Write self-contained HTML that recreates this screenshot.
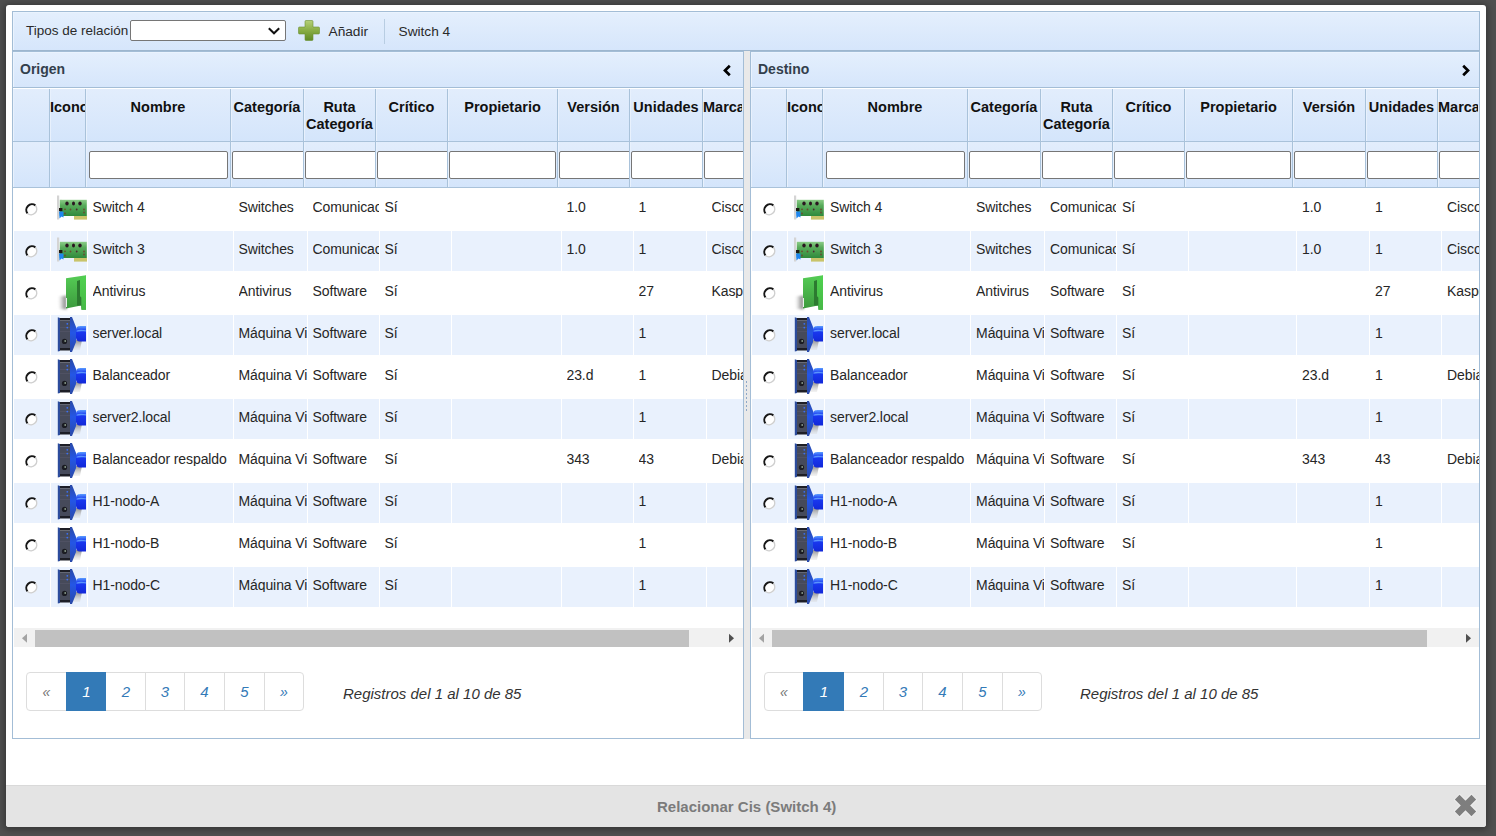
<!DOCTYPE html><html><head><meta charset="utf-8"><style>
html,body{margin:0;padding:0;}
body{width:1496px;height:836px;overflow:hidden;background:#4f4f4f;position:relative;font-family:"Liberation Sans", sans-serif;color:#222;}
.t{position:absolute;white-space:nowrap;}
.r{position:absolute;box-sizing:border-box;}
.s{position:absolute;}

.hd{font-weight:bold;font-size:14.5px;line-height:17px;text-align:center;color:#111;overflow:hidden;}
.pg{font-style:italic;font-size:15px;line-height:15px;text-align:center;}
</style></head><body>
<div class="r" style="left:6px;top:5px;width:1480px;height:822px;background:#fff;border-radius:3px;box-shadow:0 1px 6px 2px rgba(0,0,0,0.3);"></div>
<div class="r" style="left:12px;top:11px;width:1468px;height:40px;border:1px solid #a3bdd6;border-bottom-color:#9db6ce;background:linear-gradient(#e4effd,#d6e6fb);box-shadow:inset 1px 1px 0 #eaf3fe;"></div>
<div class="t" style="left:26px;top:24.369999999999997px;font-size:13.5px;line-height:13.5px;color:#2a2a2a;">Tipos de relación</div>
<div class="r" style="left:130px;top:20px;width:156px;height:21px;background:#fff;border:1px solid #767676;border-radius:2px;"></div>
<svg class="s" style="left:266px;top:26px" width="16" height="10" viewBox="0 0 16 10"><polyline points="2.8,2.3 8,7.3 13.2,2.3" fill="none" stroke="#111" stroke-width="2"/></svg>
<svg class="s" style="left:298px;top:19px" width="22" height="22" viewBox="0 0 22 22">
<defs><linearGradient id="pg" x1="0" y1="0" x2="0" y2="1"><stop offset="0" stop-color="#b5d07a"/><stop offset="0.5" stop-color="#88ad45"/><stop offset="1" stop-color="#5f8a25"/></linearGradient></defs>
<path d="M8,1.5 h6 a1,1 0 0 1 1,1 v5.5 h5.5 a1,1 0 0 1 1,1 v5 a1,1 0 0 1 -1,1 h-5.5 v5.5 a1,1 0 0 1 -1,1 h-6 a1,1 0 0 1 -1,-1 v-5.5 h-5.5 a1,1 0 0 1 -1,-1 v-5 a1,1 0 0 1 1,-1 h5.5 v-5.5 a1,1 0 0 1 1,-1 z" fill="url(#pg)" stroke="#6b9030" stroke-width="0.6"/>
</svg>
<div class="t" style="left:328.5px;top:24.6px;font-size:13.7px;line-height:13.7px;color:#2a2a2a;">Añadir</div>
<div class="r" style="left:384px;top:19px;width:1px;height:25px;background:#b8cde2;"></div>
<div class="t" style="left:398.5px;top:24.6px;font-size:13.7px;line-height:13.7px;color:#2a2a2a;">Switch 4</div>
<div class="r" style="left:6px;top:785px;width:1480px;height:42px;background:#e4e4e4;border-top:1px solid #d9d9d9;border-radius:0 0 3px 3px;"></div>
<div class="t" style="left:657px;top:798.5px;font-size:15px;line-height:15px;font-weight:bold;color:#7b7b7b;">Relacionar Cis (Switch 4)</div>
<svg class="s" style="left:1452px;top:792px" width="27" height="27" viewBox="0 0 27 27">
<path d="M4.6,4.6 L22.4,22.4 M22.4,4.6 L4.6,22.4" stroke="#eeeeee" stroke-width="8.6" stroke-linecap="butt" stroke-linejoin="round"/>
<path d="M5.2,5.2 L21.8,21.8 M21.8,5.2 L5.2,21.8" stroke="#7e7e7e" stroke-width="6.6" stroke-linecap="butt"/>
</svg>
<div class="r" style="left:744px;top:51px;width:6px;height:688px;background:#e9e9e9;"></div>
<div class="r" style="left:746px;top:381px;width:1px;height:30px;background:repeating-linear-gradient(#8fa8c8 0 2px, transparent 2px 4px);"></div>
<div class="r" style="left:12px;top:51px;width:732px;height:688px;border:1px solid #a3bdd6;background:#fff;"></div>
<div class="r" style="left:12px;top:51px;width:732px;height:37px;border:1px solid #a3bdd6;background:linear-gradient(#e4effd,#d6e6fb);box-shadow:inset 1px 1px 0 #eaf3fe;"></div>
<div class="t" style="left:20px;top:62.15px;font-size:14px;line-height:14px;font-weight:bold;color:#333f4c;">Origen</div>
<svg class="s" style="left:722px;top:63px" width="12" height="15" viewBox="0 0 12 15"><polyline points="7.8,2.8 3,7.5 7.8,12.2" fill="none" stroke="#000" stroke-width="2.7"/></svg>
<div class="r" style="left:13px;top:89px;width:730px;height:99px;overflow:hidden;">
<div class="r" style="left:0px;top:0;width:37px;height:53px;border-right:1px solid #a9c2da;border-bottom:1px solid #a9c2da;background:linear-gradient(#e2edfc,#d4e5fb);box-shadow:inset 1px 0 0 #e8f1fd;"></div>
<div class="r" style="left:0px;top:53px;width:37px;height:46px;border-right:1px solid #a9c2da;border-bottom:1px solid #a9c2da;background:linear-gradient(#e2edfc,#d4e5fb);box-shadow:inset 1px 0 0 #e8f1fd;overflow:hidden;">
</div>
<div class="r" style="left:37px;top:0;width:36px;height:53px;border-right:1px solid #a9c2da;border-bottom:1px solid #a9c2da;background:linear-gradient(#e2edfc,#d4e5fb);box-shadow:inset 1px 0 0 #e8f1fd;"></div>
<div class="r" style="left:37px;top:53px;width:36px;height:46px;border-right:1px solid #a9c2da;border-bottom:1px solid #a9c2da;background:linear-gradient(#e2edfc,#d4e5fb);box-shadow:inset 1px 0 0 #e8f1fd;overflow:hidden;">
</div>
<div class="t hd" style="left:37px;top:10px;width:35px;">Icono</div>
<div class="r" style="left:73px;top:0;width:145px;height:53px;border-right:1px solid #a9c2da;border-bottom:1px solid #a9c2da;background:linear-gradient(#e2edfc,#d4e5fb);box-shadow:inset 1px 0 0 #e8f1fd;"></div>
<div class="r" style="left:73px;top:53px;width:145px;height:46px;border-right:1px solid #a9c2da;border-bottom:1px solid #a9c2da;background:linear-gradient(#e2edfc,#d4e5fb);box-shadow:inset 1px 0 0 #e8f1fd;overflow:hidden;">
<div class="r" style="left:3px;top:9px;width:139px;height:28px;background:#fff;border:1px solid #767676;border-radius:2px;"></div>
</div>
<div class="t hd" style="left:73px;top:10px;width:144px;">Nombre</div>
<div class="r" style="left:218px;top:0;width:73px;height:53px;border-right:1px solid #a9c2da;border-bottom:1px solid #a9c2da;background:linear-gradient(#e2edfc,#d4e5fb);box-shadow:inset 1px 0 0 #e8f1fd;"></div>
<div class="r" style="left:218px;top:53px;width:73px;height:46px;border-right:1px solid #a9c2da;border-bottom:1px solid #a9c2da;background:linear-gradient(#e2edfc,#d4e5fb);box-shadow:inset 1px 0 0 #e8f1fd;overflow:hidden;">
<div class="r" style="left:1px;top:9px;width:76px;height:28px;background:#fff;border:1px solid #767676;border-radius:2px;"></div>
</div>
<div class="t hd" style="left:218px;top:10px;width:72px;">Categoría</div>
<div class="r" style="left:291px;top:0;width:72px;height:53px;border-right:1px solid #a9c2da;border-bottom:1px solid #a9c2da;background:linear-gradient(#e2edfc,#d4e5fb);box-shadow:inset 1px 0 0 #e8f1fd;"></div>
<div class="r" style="left:291px;top:53px;width:72px;height:46px;border-right:1px solid #a9c2da;border-bottom:1px solid #a9c2da;background:linear-gradient(#e2edfc,#d4e5fb);box-shadow:inset 1px 0 0 #e8f1fd;overflow:hidden;">
<div class="r" style="left:1px;top:9px;width:76px;height:28px;background:#fff;border:1px solid #767676;border-radius:2px;"></div>
</div>
<div class="t hd" style="left:291px;top:10px;width:71px;">Ruta<br>Categoría</div>
<div class="r" style="left:363px;top:0;width:72px;height:53px;border-right:1px solid #a9c2da;border-bottom:1px solid #a9c2da;background:linear-gradient(#e2edfc,#d4e5fb);box-shadow:inset 1px 0 0 #e8f1fd;"></div>
<div class="r" style="left:363px;top:53px;width:72px;height:46px;border-right:1px solid #a9c2da;border-bottom:1px solid #a9c2da;background:linear-gradient(#e2edfc,#d4e5fb);box-shadow:inset 1px 0 0 #e8f1fd;overflow:hidden;">
<div class="r" style="left:1px;top:9px;width:76px;height:28px;background:#fff;border:1px solid #767676;border-radius:2px;"></div>
</div>
<div class="t hd" style="left:363px;top:10px;width:71px;">Crítico</div>
<div class="r" style="left:435px;top:0;width:110px;height:53px;border-right:1px solid #a9c2da;border-bottom:1px solid #a9c2da;background:linear-gradient(#e2edfc,#d4e5fb);box-shadow:inset 1px 0 0 #e8f1fd;"></div>
<div class="r" style="left:435px;top:53px;width:110px;height:46px;border-right:1px solid #a9c2da;border-bottom:1px solid #a9c2da;background:linear-gradient(#e2edfc,#d4e5fb);box-shadow:inset 1px 0 0 #e8f1fd;overflow:hidden;">
<div class="r" style="left:1px;top:9px;width:107px;height:28px;background:#fff;border:1px solid #767676;border-radius:2px;"></div>
</div>
<div class="t hd" style="left:435px;top:10px;width:109px;">Propietario</div>
<div class="r" style="left:545px;top:0;width:72px;height:53px;border-right:1px solid #a9c2da;border-bottom:1px solid #a9c2da;background:linear-gradient(#e2edfc,#d4e5fb);box-shadow:inset 1px 0 0 #e8f1fd;"></div>
<div class="r" style="left:545px;top:53px;width:72px;height:46px;border-right:1px solid #a9c2da;border-bottom:1px solid #a9c2da;background:linear-gradient(#e2edfc,#d4e5fb);box-shadow:inset 1px 0 0 #e8f1fd;overflow:hidden;">
<div class="r" style="left:1px;top:9px;width:76px;height:28px;background:#fff;border:1px solid #767676;border-radius:2px;"></div>
</div>
<div class="t hd" style="left:545px;top:10px;width:71px;">Versión</div>
<div class="r" style="left:617px;top:0;width:73px;height:53px;border-right:1px solid #a9c2da;border-bottom:1px solid #a9c2da;background:linear-gradient(#e2edfc,#d4e5fb);box-shadow:inset 1px 0 0 #e8f1fd;"></div>
<div class="r" style="left:617px;top:53px;width:73px;height:46px;border-right:1px solid #a9c2da;border-bottom:1px solid #a9c2da;background:linear-gradient(#e2edfc,#d4e5fb);box-shadow:inset 1px 0 0 #e8f1fd;overflow:hidden;">
<div class="r" style="left:1px;top:9px;width:76px;height:28px;background:#fff;border:1px solid #767676;border-radius:2px;"></div>
</div>
<div class="t hd" style="left:617px;top:10px;width:72px;">Unidades</div>
<div class="r" style="left:690px;top:0;width:40px;height:53px;border-bottom:1px solid #a9c2da;background:linear-gradient(#e2edfc,#d4e5fb);box-shadow:inset 1px 0 0 #e8f1fd;"></div>
<div class="r" style="left:690px;top:53px;width:40px;height:46px;border-bottom:1px solid #a9c2da;background:linear-gradient(#e2edfc,#d4e5fb);box-shadow:inset 1px 0 0 #e8f1fd;overflow:hidden;">
<div class="r" style="left:1px;top:9px;width:76px;height:28px;background:#fff;border:1px solid #767676;border-radius:2px;"></div>
</div>
<div class="t hd" style="left:690px;top:10px;width:39px;">Marca</div>
</div>
<svg class="s" style="left:24.2px;top:201.5px" width="15" height="15" viewBox="0 0 15 15">
<circle cx="7.5" cy="7.5" r="5.7" fill="#fff"/>
<path d="M3.5,11.5 A5.7,5.7 0 0 1 11.5,3.5" fill="none" stroke="#161616" stroke-width="2"/>
<path d="M11.5,3.5 A5.7,5.7 0 0 1 3.5,11.5" fill="none" stroke="#cfcfcf" stroke-width="1.5"/>
</svg>
<svg class="s" style="left:54px;top:192px" width="33" height="30" viewBox="0 0 33 30">
<defs><linearGradient id="swg" x1="0" y1="0" x2="0" y2="1"><stop offset="0" stop-color="#8ccc88"/><stop offset="0.35" stop-color="#58ab5a"/><stop offset="1" stop-color="#2f8a3c"/></linearGradient></defs>
<rect x="3" y="3.5" width="2.2" height="24" fill="#d4d4d4"/>
<rect x="5" y="7.5" width="3" height="6.5" fill="#f4f4f4"/>
<rect x="5.8" y="7.8" width="27" height="16.2" fill="url(#swg)"/>
<rect x="20" y="24" width="13" height="3.6" fill="#c9c46a"/>
<ellipse cx="13" cy="11.5" rx="1.7" ry="2" fill="#2a1620"/><ellipse cx="19.5" cy="11.5" rx="1.5" ry="2" fill="#2a1620"/><ellipse cx="26" cy="11.5" rx="1.7" ry="2" fill="#2a1620"/>
<circle cx="11" cy="17.3" r="0.9" fill="#6a4a30"/><circle cx="16.5" cy="17.5" r="0.9" fill="#6a4a30"/><circle cx="22.7" cy="17.5" r="0.9" fill="#4a2a30"/><circle cx="30" cy="17.5" r="0.9" fill="#6a4a30"/><circle cx="11" cy="21.5" r="0.9" fill="#6a4a30"/><circle cx="30" cy="20.5" r="0.9" fill="#6a4a30"/>
<rect x="5" y="16" width="3.4" height="3.2" fill="#1e1a14"/>
<path d="M5,19.5 L9.5,19.5 L9.5,25.5 L7.5,24.5 L5.5,26.5 Z" fill="#1f86ee"/>
</svg>
<div class="t" style="left:92.5px;top:200.15px;font-size:14px;line-height:14px;color:#262626;width:140.5px;overflow:hidden;letter-spacing:-0.1px;">Switch 4</div>
<div class="t" style="left:238.5px;top:200.15px;font-size:14px;line-height:14px;color:#262626;width:68.5px;overflow:hidden;letter-spacing:-0.1px;">Switches</div>
<div class="t" style="left:312.5px;top:200.15px;font-size:14px;line-height:14px;color:#262626;width:66.5px;overflow:hidden;letter-spacing:-0.1px;">Comunicaciones</div>
<div class="t" style="left:384.5px;top:200.15px;font-size:14px;line-height:14px;color:#262626;width:66.5px;overflow:hidden;letter-spacing:-0.1px;">Sí</div>
<div class="t" style="left:566.5px;top:200.15px;font-size:14px;line-height:14px;color:#262626;width:66.5px;overflow:hidden;letter-spacing:-0.1px;">1.0</div>
<div class="t" style="left:638.5px;top:200.15px;font-size:14px;line-height:14px;color:#262626;width:67.5px;overflow:hidden;letter-spacing:-0.1px;">1</div>
<div class="t" style="left:711.5px;top:200.15px;font-size:14px;line-height:14px;color:#262626;width:31.5px;overflow:hidden;letter-spacing:-0.1px;">Cisco</div>
<div class="r" style="left:14px;top:231px;width:36px;height:40px;background:#e9f1fd;"></div>
<div class="r" style="left:51px;top:231px;width:36px;height:40px;background:#e9f1fd;"></div>
<div class="r" style="left:88px;top:231px;width:145px;height:40px;background:#e9f1fd;"></div>
<div class="r" style="left:234px;top:231px;width:73px;height:40px;background:#e9f1fd;"></div>
<div class="r" style="left:308px;top:231px;width:71px;height:40px;background:#e9f1fd;"></div>
<div class="r" style="left:380px;top:231px;width:71px;height:40px;background:#e9f1fd;"></div>
<div class="r" style="left:452px;top:231px;width:109px;height:40px;background:#e9f1fd;"></div>
<div class="r" style="left:562px;top:231px;width:71px;height:40px;background:#e9f1fd;"></div>
<div class="r" style="left:634px;top:231px;width:72px;height:40px;background:#e9f1fd;"></div>
<div class="r" style="left:707px;top:231px;width:36px;height:40px;background:#e9f1fd;"></div>
<svg class="s" style="left:24.2px;top:243.5px" width="15" height="15" viewBox="0 0 15 15">
<circle cx="7.5" cy="7.5" r="5.7" fill="#fff"/>
<path d="M3.5,11.5 A5.7,5.7 0 0 1 11.5,3.5" fill="none" stroke="#161616" stroke-width="2"/>
<path d="M11.5,3.5 A5.7,5.7 0 0 1 3.5,11.5" fill="none" stroke="#cfcfcf" stroke-width="1.5"/>
</svg>
<svg class="s" style="left:54px;top:234px" width="33" height="30" viewBox="0 0 33 30">
<defs><linearGradient id="swg" x1="0" y1="0" x2="0" y2="1"><stop offset="0" stop-color="#8ccc88"/><stop offset="0.35" stop-color="#58ab5a"/><stop offset="1" stop-color="#2f8a3c"/></linearGradient></defs>
<rect x="3" y="3.5" width="2.2" height="24" fill="#d4d4d4"/>
<rect x="5" y="7.5" width="3" height="6.5" fill="#f4f4f4"/>
<rect x="5.8" y="7.8" width="27" height="16.2" fill="url(#swg)"/>
<rect x="20" y="24" width="13" height="3.6" fill="#c9c46a"/>
<ellipse cx="13" cy="11.5" rx="1.7" ry="2" fill="#2a1620"/><ellipse cx="19.5" cy="11.5" rx="1.5" ry="2" fill="#2a1620"/><ellipse cx="26" cy="11.5" rx="1.7" ry="2" fill="#2a1620"/>
<circle cx="11" cy="17.3" r="0.9" fill="#6a4a30"/><circle cx="16.5" cy="17.5" r="0.9" fill="#6a4a30"/><circle cx="22.7" cy="17.5" r="0.9" fill="#4a2a30"/><circle cx="30" cy="17.5" r="0.9" fill="#6a4a30"/><circle cx="11" cy="21.5" r="0.9" fill="#6a4a30"/><circle cx="30" cy="20.5" r="0.9" fill="#6a4a30"/>
<rect x="5" y="16" width="3.4" height="3.2" fill="#1e1a14"/>
<path d="M5,19.5 L9.5,19.5 L9.5,25.5 L7.5,24.5 L5.5,26.5 Z" fill="#1f86ee"/>
</svg>
<div class="t" style="left:92.5px;top:242.15px;font-size:14px;line-height:14px;color:#262626;width:140.5px;overflow:hidden;letter-spacing:-0.1px;">Switch 3</div>
<div class="t" style="left:238.5px;top:242.15px;font-size:14px;line-height:14px;color:#262626;width:68.5px;overflow:hidden;letter-spacing:-0.1px;">Switches</div>
<div class="t" style="left:312.5px;top:242.15px;font-size:14px;line-height:14px;color:#262626;width:66.5px;overflow:hidden;letter-spacing:-0.1px;">Comunicaciones</div>
<div class="t" style="left:384.5px;top:242.15px;font-size:14px;line-height:14px;color:#262626;width:66.5px;overflow:hidden;letter-spacing:-0.1px;">Sí</div>
<div class="t" style="left:566.5px;top:242.15px;font-size:14px;line-height:14px;color:#262626;width:66.5px;overflow:hidden;letter-spacing:-0.1px;">1.0</div>
<div class="t" style="left:638.5px;top:242.15px;font-size:14px;line-height:14px;color:#262626;width:67.5px;overflow:hidden;letter-spacing:-0.1px;">1</div>
<div class="t" style="left:711.5px;top:242.15px;font-size:14px;line-height:14px;color:#262626;width:31.5px;overflow:hidden;letter-spacing:-0.1px;">Cisco</div>
<svg class="s" style="left:24.2px;top:285.5px" width="15" height="15" viewBox="0 0 15 15">
<circle cx="7.5" cy="7.5" r="5.7" fill="#fff"/>
<path d="M3.5,11.5 A5.7,5.7 0 0 1 11.5,3.5" fill="none" stroke="#161616" stroke-width="2"/>
<path d="M11.5,3.5 A5.7,5.7 0 0 1 3.5,11.5" fill="none" stroke="#cfcfcf" stroke-width="1.5"/>
</svg>
<svg class="s" style="left:54px;top:272px" width="33" height="42" viewBox="0 0 33 42">
<defs><linearGradient id="avg" x1="0" y1="0" x2="0" y2="1"><stop offset="0" stop-color="#55cc55"/><stop offset="1" stop-color="#3b983d"/></linearGradient>
<linearGradient id="avf" x1="0" y1="0" x2="0" y2="1"><stop offset="0" stop-color="#4fd24f"/><stop offset="1" stop-color="#46b846"/></linearGradient>
<linearGradient id="avs" x1="0" y1="0" x2="1" y2="0"><stop offset="0" stop-color="#ffffff" stop-opacity="0"/><stop offset="0.55" stop-color="#c4c4c4"/><stop offset="1" stop-color="#808080"/></linearGradient>
<filter id="avb" x="-50%" y="-50%" width="200%" height="200%"><feGaussianBlur stdDeviation="1.1"/></filter></defs>
<path d="M3,24.5 L12.5,23.5 L12.5,37.5 L5,37 Z" fill="url(#avs)" filter="url(#avb)"/>
<path d="M12,6.2 L32,3.2 L32,37.8 L27.5,37.8 L27,33.5 L12,36.5 Z" fill="url(#avg)"/>
<path d="M23,9 L26,8 L26,24 L27.5,25.5 L27.5,33.5 L23,33.5 Z" fill="#2c7a30"/>
<path d="M26,7.5 L32,3.5 L32,37.5 L27.5,37.8 L27.5,25.5 L26,24 Z" fill="url(#avf)"/>
<rect x="12" y="26" width="1" height="9" fill="#e6f2ea"/>
</svg>
<div class="t" style="left:92.5px;top:284.15px;font-size:14px;line-height:14px;color:#262626;width:140.5px;overflow:hidden;letter-spacing:-0.1px;">Antivirus</div>
<div class="t" style="left:238.5px;top:284.15px;font-size:14px;line-height:14px;color:#262626;width:68.5px;overflow:hidden;letter-spacing:-0.1px;">Antivirus</div>
<div class="t" style="left:312.5px;top:284.15px;font-size:14px;line-height:14px;color:#262626;width:66.5px;overflow:hidden;letter-spacing:-0.1px;">Software</div>
<div class="t" style="left:384.5px;top:284.15px;font-size:14px;line-height:14px;color:#262626;width:66.5px;overflow:hidden;letter-spacing:-0.1px;">Sí</div>
<div class="t" style="left:638.5px;top:284.15px;font-size:14px;line-height:14px;color:#262626;width:67.5px;overflow:hidden;letter-spacing:-0.1px;">27</div>
<div class="t" style="left:711.5px;top:284.15px;font-size:14px;line-height:14px;color:#262626;width:31.5px;overflow:hidden;letter-spacing:-0.1px;">Kaspersky</div>
<div class="r" style="left:14px;top:315px;width:36px;height:40px;background:#e9f1fd;"></div>
<div class="r" style="left:51px;top:315px;width:36px;height:40px;background:#e9f1fd;"></div>
<div class="r" style="left:88px;top:315px;width:145px;height:40px;background:#e9f1fd;"></div>
<div class="r" style="left:234px;top:315px;width:73px;height:40px;background:#e9f1fd;"></div>
<div class="r" style="left:308px;top:315px;width:71px;height:40px;background:#e9f1fd;"></div>
<div class="r" style="left:380px;top:315px;width:71px;height:40px;background:#e9f1fd;"></div>
<div class="r" style="left:452px;top:315px;width:109px;height:40px;background:#e9f1fd;"></div>
<div class="r" style="left:562px;top:315px;width:71px;height:40px;background:#e9f1fd;"></div>
<div class="r" style="left:634px;top:315px;width:72px;height:40px;background:#e9f1fd;"></div>
<div class="r" style="left:707px;top:315px;width:36px;height:40px;background:#e9f1fd;"></div>
<svg class="s" style="left:24.2px;top:327.5px" width="15" height="15" viewBox="0 0 15 15">
<circle cx="7.5" cy="7.5" r="5.7" fill="#fff"/>
<path d="M3.5,11.5 A5.7,5.7 0 0 1 11.5,3.5" fill="none" stroke="#161616" stroke-width="2"/>
<path d="M11.5,3.5 A5.7,5.7 0 0 1 3.5,11.5" fill="none" stroke="#cfcfcf" stroke-width="1.5"/>
</svg>
<svg class="s" style="left:54px;top:314px" width="33" height="42" viewBox="0 0 33 42">
<defs><linearGradient id="svg1" x1="0" y1="0" x2="0" y2="1"><stop offset="0" stop-color="#5a9cff"/><stop offset="0.3" stop-color="#1a3af2"/><stop offset="1" stop-color="#1228d8"/></linearGradient>
<linearGradient id="svside" x1="0" y1="0" x2="0" y2="1"><stop offset="0" stop-color="#2a4aa8"/><stop offset="0.45" stop-color="#2456e6"/><stop offset="1" stop-color="#2a4aa8"/></linearGradient>
<linearGradient id="svsh" x1="0" y1="0" x2="0" y2="1"><stop offset="0" stop-color="#8a8a8a"/><stop offset="1" stop-color="#d8d8d8" stop-opacity="0.3"/></linearGradient></defs>
<path d="M19,26 L28,26 L26,36 L19,36 Z" fill="url(#svsh)"/>
<path d="M3.8,3.3 L6,4 L6,37 L3.8,37.5 Z" fill="#2c4c9c"/>
<rect x="6" y="4" width="10" height="2.5" fill="#1d1e26"/>
<rect x="6" y="6.5" width="10" height="28" fill="#464a5a"/>
<rect x="6" y="34" width="10" height="2.5" fill="#1d1e26"/>
<rect x="6" y="13" width="10" height="0.6" fill="#55576a"/><rect x="6" y="17" width="10" height="0.6" fill="#55576a"/>
<circle cx="13.3" cy="9.8" r="0.9" fill="#3a70f5"/><circle cx="13.3" cy="13.6" r="0.9" fill="#3a70f5"/>
<circle cx="10.5" cy="27.4" r="2.6" fill="#1b1c22"/><circle cx="11.2" cy="27" r="0.9" fill="#8a9a8a"/>
<path d="M16,3 L18,3 L22,13 L22,28 L18,38 L16,38 Z" fill="url(#svside)"/>
<path d="M22,15.5 C22,12.5 24.5,12 27,12 L32,12 L32,27.6 L27,27.6 C24,27.6 22,26.5 22,23.5 Z" fill="url(#svg1)"/>
<path d="M22.5,16.5 C25,15.5 28,15.5 32,16.2 L32,17.5 C28,17 25,17 22.5,17.8 Z" fill="#6aaaff" opacity="0.8"/>
</svg>
<div class="t" style="left:92.5px;top:326.15px;font-size:14px;line-height:14px;color:#262626;width:140.5px;overflow:hidden;letter-spacing:-0.1px;">server.local</div>
<div class="t" style="left:238.5px;top:326.15px;font-size:14px;line-height:14px;color:#262626;width:68.5px;overflow:hidden;letter-spacing:-0.1px;">Máquina Virtual</div>
<div class="t" style="left:312.5px;top:326.15px;font-size:14px;line-height:14px;color:#262626;width:66.5px;overflow:hidden;letter-spacing:-0.1px;">Software</div>
<div class="t" style="left:384.5px;top:326.15px;font-size:14px;line-height:14px;color:#262626;width:66.5px;overflow:hidden;letter-spacing:-0.1px;">Sí</div>
<div class="t" style="left:638.5px;top:326.15px;font-size:14px;line-height:14px;color:#262626;width:67.5px;overflow:hidden;letter-spacing:-0.1px;">1</div>
<svg class="s" style="left:24.2px;top:369.5px" width="15" height="15" viewBox="0 0 15 15">
<circle cx="7.5" cy="7.5" r="5.7" fill="#fff"/>
<path d="M3.5,11.5 A5.7,5.7 0 0 1 11.5,3.5" fill="none" stroke="#161616" stroke-width="2"/>
<path d="M11.5,3.5 A5.7,5.7 0 0 1 3.5,11.5" fill="none" stroke="#cfcfcf" stroke-width="1.5"/>
</svg>
<svg class="s" style="left:54px;top:356px" width="33" height="42" viewBox="0 0 33 42">
<defs><linearGradient id="svg1" x1="0" y1="0" x2="0" y2="1"><stop offset="0" stop-color="#5a9cff"/><stop offset="0.3" stop-color="#1a3af2"/><stop offset="1" stop-color="#1228d8"/></linearGradient>
<linearGradient id="svside" x1="0" y1="0" x2="0" y2="1"><stop offset="0" stop-color="#2a4aa8"/><stop offset="0.45" stop-color="#2456e6"/><stop offset="1" stop-color="#2a4aa8"/></linearGradient>
<linearGradient id="svsh" x1="0" y1="0" x2="0" y2="1"><stop offset="0" stop-color="#8a8a8a"/><stop offset="1" stop-color="#d8d8d8" stop-opacity="0.3"/></linearGradient></defs>
<path d="M19,26 L28,26 L26,36 L19,36 Z" fill="url(#svsh)"/>
<path d="M3.8,3.3 L6,4 L6,37 L3.8,37.5 Z" fill="#2c4c9c"/>
<rect x="6" y="4" width="10" height="2.5" fill="#1d1e26"/>
<rect x="6" y="6.5" width="10" height="28" fill="#464a5a"/>
<rect x="6" y="34" width="10" height="2.5" fill="#1d1e26"/>
<rect x="6" y="13" width="10" height="0.6" fill="#55576a"/><rect x="6" y="17" width="10" height="0.6" fill="#55576a"/>
<circle cx="13.3" cy="9.8" r="0.9" fill="#3a70f5"/><circle cx="13.3" cy="13.6" r="0.9" fill="#3a70f5"/>
<circle cx="10.5" cy="27.4" r="2.6" fill="#1b1c22"/><circle cx="11.2" cy="27" r="0.9" fill="#8a9a8a"/>
<path d="M16,3 L18,3 L22,13 L22,28 L18,38 L16,38 Z" fill="url(#svside)"/>
<path d="M22,15.5 C22,12.5 24.5,12 27,12 L32,12 L32,27.6 L27,27.6 C24,27.6 22,26.5 22,23.5 Z" fill="url(#svg1)"/>
<path d="M22.5,16.5 C25,15.5 28,15.5 32,16.2 L32,17.5 C28,17 25,17 22.5,17.8 Z" fill="#6aaaff" opacity="0.8"/>
</svg>
<div class="t" style="left:92.5px;top:368.15px;font-size:14px;line-height:14px;color:#262626;width:140.5px;overflow:hidden;letter-spacing:-0.1px;">Balanceador</div>
<div class="t" style="left:238.5px;top:368.15px;font-size:14px;line-height:14px;color:#262626;width:68.5px;overflow:hidden;letter-spacing:-0.1px;">Máquina Virtual</div>
<div class="t" style="left:312.5px;top:368.15px;font-size:14px;line-height:14px;color:#262626;width:66.5px;overflow:hidden;letter-spacing:-0.1px;">Software</div>
<div class="t" style="left:384.5px;top:368.15px;font-size:14px;line-height:14px;color:#262626;width:66.5px;overflow:hidden;letter-spacing:-0.1px;">Sí</div>
<div class="t" style="left:566.5px;top:368.15px;font-size:14px;line-height:14px;color:#262626;width:66.5px;overflow:hidden;letter-spacing:-0.1px;">23.d</div>
<div class="t" style="left:638.5px;top:368.15px;font-size:14px;line-height:14px;color:#262626;width:67.5px;overflow:hidden;letter-spacing:-0.1px;">1</div>
<div class="t" style="left:711.5px;top:368.15px;font-size:14px;line-height:14px;color:#262626;width:31.5px;overflow:hidden;letter-spacing:-0.1px;">Debian</div>
<div class="r" style="left:14px;top:399px;width:36px;height:40px;background:#e9f1fd;"></div>
<div class="r" style="left:51px;top:399px;width:36px;height:40px;background:#e9f1fd;"></div>
<div class="r" style="left:88px;top:399px;width:145px;height:40px;background:#e9f1fd;"></div>
<div class="r" style="left:234px;top:399px;width:73px;height:40px;background:#e9f1fd;"></div>
<div class="r" style="left:308px;top:399px;width:71px;height:40px;background:#e9f1fd;"></div>
<div class="r" style="left:380px;top:399px;width:71px;height:40px;background:#e9f1fd;"></div>
<div class="r" style="left:452px;top:399px;width:109px;height:40px;background:#e9f1fd;"></div>
<div class="r" style="left:562px;top:399px;width:71px;height:40px;background:#e9f1fd;"></div>
<div class="r" style="left:634px;top:399px;width:72px;height:40px;background:#e9f1fd;"></div>
<div class="r" style="left:707px;top:399px;width:36px;height:40px;background:#e9f1fd;"></div>
<svg class="s" style="left:24.2px;top:411.5px" width="15" height="15" viewBox="0 0 15 15">
<circle cx="7.5" cy="7.5" r="5.7" fill="#fff"/>
<path d="M3.5,11.5 A5.7,5.7 0 0 1 11.5,3.5" fill="none" stroke="#161616" stroke-width="2"/>
<path d="M11.5,3.5 A5.7,5.7 0 0 1 3.5,11.5" fill="none" stroke="#cfcfcf" stroke-width="1.5"/>
</svg>
<svg class="s" style="left:54px;top:398px" width="33" height="42" viewBox="0 0 33 42">
<defs><linearGradient id="svg1" x1="0" y1="0" x2="0" y2="1"><stop offset="0" stop-color="#5a9cff"/><stop offset="0.3" stop-color="#1a3af2"/><stop offset="1" stop-color="#1228d8"/></linearGradient>
<linearGradient id="svside" x1="0" y1="0" x2="0" y2="1"><stop offset="0" stop-color="#2a4aa8"/><stop offset="0.45" stop-color="#2456e6"/><stop offset="1" stop-color="#2a4aa8"/></linearGradient>
<linearGradient id="svsh" x1="0" y1="0" x2="0" y2="1"><stop offset="0" stop-color="#8a8a8a"/><stop offset="1" stop-color="#d8d8d8" stop-opacity="0.3"/></linearGradient></defs>
<path d="M19,26 L28,26 L26,36 L19,36 Z" fill="url(#svsh)"/>
<path d="M3.8,3.3 L6,4 L6,37 L3.8,37.5 Z" fill="#2c4c9c"/>
<rect x="6" y="4" width="10" height="2.5" fill="#1d1e26"/>
<rect x="6" y="6.5" width="10" height="28" fill="#464a5a"/>
<rect x="6" y="34" width="10" height="2.5" fill="#1d1e26"/>
<rect x="6" y="13" width="10" height="0.6" fill="#55576a"/><rect x="6" y="17" width="10" height="0.6" fill="#55576a"/>
<circle cx="13.3" cy="9.8" r="0.9" fill="#3a70f5"/><circle cx="13.3" cy="13.6" r="0.9" fill="#3a70f5"/>
<circle cx="10.5" cy="27.4" r="2.6" fill="#1b1c22"/><circle cx="11.2" cy="27" r="0.9" fill="#8a9a8a"/>
<path d="M16,3 L18,3 L22,13 L22,28 L18,38 L16,38 Z" fill="url(#svside)"/>
<path d="M22,15.5 C22,12.5 24.5,12 27,12 L32,12 L32,27.6 L27,27.6 C24,27.6 22,26.5 22,23.5 Z" fill="url(#svg1)"/>
<path d="M22.5,16.5 C25,15.5 28,15.5 32,16.2 L32,17.5 C28,17 25,17 22.5,17.8 Z" fill="#6aaaff" opacity="0.8"/>
</svg>
<div class="t" style="left:92.5px;top:410.15px;font-size:14px;line-height:14px;color:#262626;width:140.5px;overflow:hidden;letter-spacing:-0.1px;">server2.local</div>
<div class="t" style="left:238.5px;top:410.15px;font-size:14px;line-height:14px;color:#262626;width:68.5px;overflow:hidden;letter-spacing:-0.1px;">Máquina Virtual</div>
<div class="t" style="left:312.5px;top:410.15px;font-size:14px;line-height:14px;color:#262626;width:66.5px;overflow:hidden;letter-spacing:-0.1px;">Software</div>
<div class="t" style="left:384.5px;top:410.15px;font-size:14px;line-height:14px;color:#262626;width:66.5px;overflow:hidden;letter-spacing:-0.1px;">Sí</div>
<div class="t" style="left:638.5px;top:410.15px;font-size:14px;line-height:14px;color:#262626;width:67.5px;overflow:hidden;letter-spacing:-0.1px;">1</div>
<svg class="s" style="left:24.2px;top:453.5px" width="15" height="15" viewBox="0 0 15 15">
<circle cx="7.5" cy="7.5" r="5.7" fill="#fff"/>
<path d="M3.5,11.5 A5.7,5.7 0 0 1 11.5,3.5" fill="none" stroke="#161616" stroke-width="2"/>
<path d="M11.5,3.5 A5.7,5.7 0 0 1 3.5,11.5" fill="none" stroke="#cfcfcf" stroke-width="1.5"/>
</svg>
<svg class="s" style="left:54px;top:440px" width="33" height="42" viewBox="0 0 33 42">
<defs><linearGradient id="svg1" x1="0" y1="0" x2="0" y2="1"><stop offset="0" stop-color="#5a9cff"/><stop offset="0.3" stop-color="#1a3af2"/><stop offset="1" stop-color="#1228d8"/></linearGradient>
<linearGradient id="svside" x1="0" y1="0" x2="0" y2="1"><stop offset="0" stop-color="#2a4aa8"/><stop offset="0.45" stop-color="#2456e6"/><stop offset="1" stop-color="#2a4aa8"/></linearGradient>
<linearGradient id="svsh" x1="0" y1="0" x2="0" y2="1"><stop offset="0" stop-color="#8a8a8a"/><stop offset="1" stop-color="#d8d8d8" stop-opacity="0.3"/></linearGradient></defs>
<path d="M19,26 L28,26 L26,36 L19,36 Z" fill="url(#svsh)"/>
<path d="M3.8,3.3 L6,4 L6,37 L3.8,37.5 Z" fill="#2c4c9c"/>
<rect x="6" y="4" width="10" height="2.5" fill="#1d1e26"/>
<rect x="6" y="6.5" width="10" height="28" fill="#464a5a"/>
<rect x="6" y="34" width="10" height="2.5" fill="#1d1e26"/>
<rect x="6" y="13" width="10" height="0.6" fill="#55576a"/><rect x="6" y="17" width="10" height="0.6" fill="#55576a"/>
<circle cx="13.3" cy="9.8" r="0.9" fill="#3a70f5"/><circle cx="13.3" cy="13.6" r="0.9" fill="#3a70f5"/>
<circle cx="10.5" cy="27.4" r="2.6" fill="#1b1c22"/><circle cx="11.2" cy="27" r="0.9" fill="#8a9a8a"/>
<path d="M16,3 L18,3 L22,13 L22,28 L18,38 L16,38 Z" fill="url(#svside)"/>
<path d="M22,15.5 C22,12.5 24.5,12 27,12 L32,12 L32,27.6 L27,27.6 C24,27.6 22,26.5 22,23.5 Z" fill="url(#svg1)"/>
<path d="M22.5,16.5 C25,15.5 28,15.5 32,16.2 L32,17.5 C28,17 25,17 22.5,17.8 Z" fill="#6aaaff" opacity="0.8"/>
</svg>
<div class="t" style="left:92.5px;top:452.15px;font-size:14px;line-height:14px;color:#262626;width:140.5px;overflow:hidden;letter-spacing:-0.1px;">Balanceador respaldo</div>
<div class="t" style="left:238.5px;top:452.15px;font-size:14px;line-height:14px;color:#262626;width:68.5px;overflow:hidden;letter-spacing:-0.1px;">Máquina Virtual</div>
<div class="t" style="left:312.5px;top:452.15px;font-size:14px;line-height:14px;color:#262626;width:66.5px;overflow:hidden;letter-spacing:-0.1px;">Software</div>
<div class="t" style="left:384.5px;top:452.15px;font-size:14px;line-height:14px;color:#262626;width:66.5px;overflow:hidden;letter-spacing:-0.1px;">Sí</div>
<div class="t" style="left:566.5px;top:452.15px;font-size:14px;line-height:14px;color:#262626;width:66.5px;overflow:hidden;letter-spacing:-0.1px;">343</div>
<div class="t" style="left:638.5px;top:452.15px;font-size:14px;line-height:14px;color:#262626;width:67.5px;overflow:hidden;letter-spacing:-0.1px;">43</div>
<div class="t" style="left:711.5px;top:452.15px;font-size:14px;line-height:14px;color:#262626;width:31.5px;overflow:hidden;letter-spacing:-0.1px;">Debian</div>
<div class="r" style="left:14px;top:483px;width:36px;height:40px;background:#e9f1fd;"></div>
<div class="r" style="left:51px;top:483px;width:36px;height:40px;background:#e9f1fd;"></div>
<div class="r" style="left:88px;top:483px;width:145px;height:40px;background:#e9f1fd;"></div>
<div class="r" style="left:234px;top:483px;width:73px;height:40px;background:#e9f1fd;"></div>
<div class="r" style="left:308px;top:483px;width:71px;height:40px;background:#e9f1fd;"></div>
<div class="r" style="left:380px;top:483px;width:71px;height:40px;background:#e9f1fd;"></div>
<div class="r" style="left:452px;top:483px;width:109px;height:40px;background:#e9f1fd;"></div>
<div class="r" style="left:562px;top:483px;width:71px;height:40px;background:#e9f1fd;"></div>
<div class="r" style="left:634px;top:483px;width:72px;height:40px;background:#e9f1fd;"></div>
<div class="r" style="left:707px;top:483px;width:36px;height:40px;background:#e9f1fd;"></div>
<svg class="s" style="left:24.2px;top:495.5px" width="15" height="15" viewBox="0 0 15 15">
<circle cx="7.5" cy="7.5" r="5.7" fill="#fff"/>
<path d="M3.5,11.5 A5.7,5.7 0 0 1 11.5,3.5" fill="none" stroke="#161616" stroke-width="2"/>
<path d="M11.5,3.5 A5.7,5.7 0 0 1 3.5,11.5" fill="none" stroke="#cfcfcf" stroke-width="1.5"/>
</svg>
<svg class="s" style="left:54px;top:482px" width="33" height="42" viewBox="0 0 33 42">
<defs><linearGradient id="svg1" x1="0" y1="0" x2="0" y2="1"><stop offset="0" stop-color="#5a9cff"/><stop offset="0.3" stop-color="#1a3af2"/><stop offset="1" stop-color="#1228d8"/></linearGradient>
<linearGradient id="svside" x1="0" y1="0" x2="0" y2="1"><stop offset="0" stop-color="#2a4aa8"/><stop offset="0.45" stop-color="#2456e6"/><stop offset="1" stop-color="#2a4aa8"/></linearGradient>
<linearGradient id="svsh" x1="0" y1="0" x2="0" y2="1"><stop offset="0" stop-color="#8a8a8a"/><stop offset="1" stop-color="#d8d8d8" stop-opacity="0.3"/></linearGradient></defs>
<path d="M19,26 L28,26 L26,36 L19,36 Z" fill="url(#svsh)"/>
<path d="M3.8,3.3 L6,4 L6,37 L3.8,37.5 Z" fill="#2c4c9c"/>
<rect x="6" y="4" width="10" height="2.5" fill="#1d1e26"/>
<rect x="6" y="6.5" width="10" height="28" fill="#464a5a"/>
<rect x="6" y="34" width="10" height="2.5" fill="#1d1e26"/>
<rect x="6" y="13" width="10" height="0.6" fill="#55576a"/><rect x="6" y="17" width="10" height="0.6" fill="#55576a"/>
<circle cx="13.3" cy="9.8" r="0.9" fill="#3a70f5"/><circle cx="13.3" cy="13.6" r="0.9" fill="#3a70f5"/>
<circle cx="10.5" cy="27.4" r="2.6" fill="#1b1c22"/><circle cx="11.2" cy="27" r="0.9" fill="#8a9a8a"/>
<path d="M16,3 L18,3 L22,13 L22,28 L18,38 L16,38 Z" fill="url(#svside)"/>
<path d="M22,15.5 C22,12.5 24.5,12 27,12 L32,12 L32,27.6 L27,27.6 C24,27.6 22,26.5 22,23.5 Z" fill="url(#svg1)"/>
<path d="M22.5,16.5 C25,15.5 28,15.5 32,16.2 L32,17.5 C28,17 25,17 22.5,17.8 Z" fill="#6aaaff" opacity="0.8"/>
</svg>
<div class="t" style="left:92.5px;top:494.15px;font-size:14px;line-height:14px;color:#262626;width:140.5px;overflow:hidden;letter-spacing:-0.1px;">H1-nodo-A</div>
<div class="t" style="left:238.5px;top:494.15px;font-size:14px;line-height:14px;color:#262626;width:68.5px;overflow:hidden;letter-spacing:-0.1px;">Máquina Virtual</div>
<div class="t" style="left:312.5px;top:494.15px;font-size:14px;line-height:14px;color:#262626;width:66.5px;overflow:hidden;letter-spacing:-0.1px;">Software</div>
<div class="t" style="left:384.5px;top:494.15px;font-size:14px;line-height:14px;color:#262626;width:66.5px;overflow:hidden;letter-spacing:-0.1px;">Sí</div>
<div class="t" style="left:638.5px;top:494.15px;font-size:14px;line-height:14px;color:#262626;width:67.5px;overflow:hidden;letter-spacing:-0.1px;">1</div>
<svg class="s" style="left:24.2px;top:537.5px" width="15" height="15" viewBox="0 0 15 15">
<circle cx="7.5" cy="7.5" r="5.7" fill="#fff"/>
<path d="M3.5,11.5 A5.7,5.7 0 0 1 11.5,3.5" fill="none" stroke="#161616" stroke-width="2"/>
<path d="M11.5,3.5 A5.7,5.7 0 0 1 3.5,11.5" fill="none" stroke="#cfcfcf" stroke-width="1.5"/>
</svg>
<svg class="s" style="left:54px;top:524px" width="33" height="42" viewBox="0 0 33 42">
<defs><linearGradient id="svg1" x1="0" y1="0" x2="0" y2="1"><stop offset="0" stop-color="#5a9cff"/><stop offset="0.3" stop-color="#1a3af2"/><stop offset="1" stop-color="#1228d8"/></linearGradient>
<linearGradient id="svside" x1="0" y1="0" x2="0" y2="1"><stop offset="0" stop-color="#2a4aa8"/><stop offset="0.45" stop-color="#2456e6"/><stop offset="1" stop-color="#2a4aa8"/></linearGradient>
<linearGradient id="svsh" x1="0" y1="0" x2="0" y2="1"><stop offset="0" stop-color="#8a8a8a"/><stop offset="1" stop-color="#d8d8d8" stop-opacity="0.3"/></linearGradient></defs>
<path d="M19,26 L28,26 L26,36 L19,36 Z" fill="url(#svsh)"/>
<path d="M3.8,3.3 L6,4 L6,37 L3.8,37.5 Z" fill="#2c4c9c"/>
<rect x="6" y="4" width="10" height="2.5" fill="#1d1e26"/>
<rect x="6" y="6.5" width="10" height="28" fill="#464a5a"/>
<rect x="6" y="34" width="10" height="2.5" fill="#1d1e26"/>
<rect x="6" y="13" width="10" height="0.6" fill="#55576a"/><rect x="6" y="17" width="10" height="0.6" fill="#55576a"/>
<circle cx="13.3" cy="9.8" r="0.9" fill="#3a70f5"/><circle cx="13.3" cy="13.6" r="0.9" fill="#3a70f5"/>
<circle cx="10.5" cy="27.4" r="2.6" fill="#1b1c22"/><circle cx="11.2" cy="27" r="0.9" fill="#8a9a8a"/>
<path d="M16,3 L18,3 L22,13 L22,28 L18,38 L16,38 Z" fill="url(#svside)"/>
<path d="M22,15.5 C22,12.5 24.5,12 27,12 L32,12 L32,27.6 L27,27.6 C24,27.6 22,26.5 22,23.5 Z" fill="url(#svg1)"/>
<path d="M22.5,16.5 C25,15.5 28,15.5 32,16.2 L32,17.5 C28,17 25,17 22.5,17.8 Z" fill="#6aaaff" opacity="0.8"/>
</svg>
<div class="t" style="left:92.5px;top:536.15px;font-size:14px;line-height:14px;color:#262626;width:140.5px;overflow:hidden;letter-spacing:-0.1px;">H1-nodo-B</div>
<div class="t" style="left:238.5px;top:536.15px;font-size:14px;line-height:14px;color:#262626;width:68.5px;overflow:hidden;letter-spacing:-0.1px;">Máquina Virtual</div>
<div class="t" style="left:312.5px;top:536.15px;font-size:14px;line-height:14px;color:#262626;width:66.5px;overflow:hidden;letter-spacing:-0.1px;">Software</div>
<div class="t" style="left:384.5px;top:536.15px;font-size:14px;line-height:14px;color:#262626;width:66.5px;overflow:hidden;letter-spacing:-0.1px;">Sí</div>
<div class="t" style="left:638.5px;top:536.15px;font-size:14px;line-height:14px;color:#262626;width:67.5px;overflow:hidden;letter-spacing:-0.1px;">1</div>
<div class="r" style="left:14px;top:567px;width:36px;height:40px;background:#e9f1fd;"></div>
<div class="r" style="left:51px;top:567px;width:36px;height:40px;background:#e9f1fd;"></div>
<div class="r" style="left:88px;top:567px;width:145px;height:40px;background:#e9f1fd;"></div>
<div class="r" style="left:234px;top:567px;width:73px;height:40px;background:#e9f1fd;"></div>
<div class="r" style="left:308px;top:567px;width:71px;height:40px;background:#e9f1fd;"></div>
<div class="r" style="left:380px;top:567px;width:71px;height:40px;background:#e9f1fd;"></div>
<div class="r" style="left:452px;top:567px;width:109px;height:40px;background:#e9f1fd;"></div>
<div class="r" style="left:562px;top:567px;width:71px;height:40px;background:#e9f1fd;"></div>
<div class="r" style="left:634px;top:567px;width:72px;height:40px;background:#e9f1fd;"></div>
<div class="r" style="left:707px;top:567px;width:36px;height:40px;background:#e9f1fd;"></div>
<svg class="s" style="left:24.2px;top:579.5px" width="15" height="15" viewBox="0 0 15 15">
<circle cx="7.5" cy="7.5" r="5.7" fill="#fff"/>
<path d="M3.5,11.5 A5.7,5.7 0 0 1 11.5,3.5" fill="none" stroke="#161616" stroke-width="2"/>
<path d="M11.5,3.5 A5.7,5.7 0 0 1 3.5,11.5" fill="none" stroke="#cfcfcf" stroke-width="1.5"/>
</svg>
<svg class="s" style="left:54px;top:566px" width="33" height="42" viewBox="0 0 33 42">
<defs><linearGradient id="svg1" x1="0" y1="0" x2="0" y2="1"><stop offset="0" stop-color="#5a9cff"/><stop offset="0.3" stop-color="#1a3af2"/><stop offset="1" stop-color="#1228d8"/></linearGradient>
<linearGradient id="svside" x1="0" y1="0" x2="0" y2="1"><stop offset="0" stop-color="#2a4aa8"/><stop offset="0.45" stop-color="#2456e6"/><stop offset="1" stop-color="#2a4aa8"/></linearGradient>
<linearGradient id="svsh" x1="0" y1="0" x2="0" y2="1"><stop offset="0" stop-color="#8a8a8a"/><stop offset="1" stop-color="#d8d8d8" stop-opacity="0.3"/></linearGradient></defs>
<path d="M19,26 L28,26 L26,36 L19,36 Z" fill="url(#svsh)"/>
<path d="M3.8,3.3 L6,4 L6,37 L3.8,37.5 Z" fill="#2c4c9c"/>
<rect x="6" y="4" width="10" height="2.5" fill="#1d1e26"/>
<rect x="6" y="6.5" width="10" height="28" fill="#464a5a"/>
<rect x="6" y="34" width="10" height="2.5" fill="#1d1e26"/>
<rect x="6" y="13" width="10" height="0.6" fill="#55576a"/><rect x="6" y="17" width="10" height="0.6" fill="#55576a"/>
<circle cx="13.3" cy="9.8" r="0.9" fill="#3a70f5"/><circle cx="13.3" cy="13.6" r="0.9" fill="#3a70f5"/>
<circle cx="10.5" cy="27.4" r="2.6" fill="#1b1c22"/><circle cx="11.2" cy="27" r="0.9" fill="#8a9a8a"/>
<path d="M16,3 L18,3 L22,13 L22,28 L18,38 L16,38 Z" fill="url(#svside)"/>
<path d="M22,15.5 C22,12.5 24.5,12 27,12 L32,12 L32,27.6 L27,27.6 C24,27.6 22,26.5 22,23.5 Z" fill="url(#svg1)"/>
<path d="M22.5,16.5 C25,15.5 28,15.5 32,16.2 L32,17.5 C28,17 25,17 22.5,17.8 Z" fill="#6aaaff" opacity="0.8"/>
</svg>
<div class="t" style="left:92.5px;top:578.15px;font-size:14px;line-height:14px;color:#262626;width:140.5px;overflow:hidden;letter-spacing:-0.1px;">H1-nodo-C</div>
<div class="t" style="left:238.5px;top:578.15px;font-size:14px;line-height:14px;color:#262626;width:68.5px;overflow:hidden;letter-spacing:-0.1px;">Máquina Virtual</div>
<div class="t" style="left:312.5px;top:578.15px;font-size:14px;line-height:14px;color:#262626;width:66.5px;overflow:hidden;letter-spacing:-0.1px;">Software</div>
<div class="t" style="left:384.5px;top:578.15px;font-size:14px;line-height:14px;color:#262626;width:66.5px;overflow:hidden;letter-spacing:-0.1px;">Sí</div>
<div class="t" style="left:638.5px;top:578.15px;font-size:14px;line-height:14px;color:#262626;width:67.5px;overflow:hidden;letter-spacing:-0.1px;">1</div>
<div class="r" style="left:14px;top:628px;width:729px;height:19px;background:#f1f1f1;"></div>
<div class="r" style="left:750px;top:51px;width:730px;height:688px;border:1px solid #a3bdd6;background:#fff;"></div>
<div class="r" style="left:750px;top:51px;width:730px;height:37px;border:1px solid #a3bdd6;background:linear-gradient(#e4effd,#d6e6fb);box-shadow:inset 1px 1px 0 #eaf3fe;"></div>
<div class="t" style="left:758px;top:62.15px;font-size:14px;line-height:14px;font-weight:bold;color:#333f4c;">Destino</div>
<svg class="s" style="left:1460px;top:63px" width="12" height="15" viewBox="0 0 12 15"><polyline points="3.2,2.8 8,7.5 3.2,12.2" fill="none" stroke="#000" stroke-width="2.7"/></svg>
<div class="r" style="left:751px;top:89px;width:728px;height:99px;overflow:hidden;">
<div class="r" style="left:0px;top:0;width:36px;height:53px;border-right:1px solid #a9c2da;border-bottom:1px solid #a9c2da;background:linear-gradient(#e2edfc,#d4e5fb);box-shadow:inset 1px 0 0 #e8f1fd;"></div>
<div class="r" style="left:0px;top:53px;width:36px;height:46px;border-right:1px solid #a9c2da;border-bottom:1px solid #a9c2da;background:linear-gradient(#e2edfc,#d4e5fb);box-shadow:inset 1px 0 0 #e8f1fd;overflow:hidden;">
</div>
<div class="r" style="left:36px;top:0;width:36px;height:53px;border-right:1px solid #a9c2da;border-bottom:1px solid #a9c2da;background:linear-gradient(#e2edfc,#d4e5fb);box-shadow:inset 1px 0 0 #e8f1fd;"></div>
<div class="r" style="left:36px;top:53px;width:36px;height:46px;border-right:1px solid #a9c2da;border-bottom:1px solid #a9c2da;background:linear-gradient(#e2edfc,#d4e5fb);box-shadow:inset 1px 0 0 #e8f1fd;overflow:hidden;">
</div>
<div class="t hd" style="left:36px;top:10px;width:35px;">Icono</div>
<div class="r" style="left:72px;top:0;width:145px;height:53px;border-right:1px solid #a9c2da;border-bottom:1px solid #a9c2da;background:linear-gradient(#e2edfc,#d4e5fb);box-shadow:inset 1px 0 0 #e8f1fd;"></div>
<div class="r" style="left:72px;top:53px;width:145px;height:46px;border-right:1px solid #a9c2da;border-bottom:1px solid #a9c2da;background:linear-gradient(#e2edfc,#d4e5fb);box-shadow:inset 1px 0 0 #e8f1fd;overflow:hidden;">
<div class="r" style="left:3px;top:9px;width:139px;height:28px;background:#fff;border:1px solid #767676;border-radius:2px;"></div>
</div>
<div class="t hd" style="left:72px;top:10px;width:144px;">Nombre</div>
<div class="r" style="left:217px;top:0;width:73px;height:53px;border-right:1px solid #a9c2da;border-bottom:1px solid #a9c2da;background:linear-gradient(#e2edfc,#d4e5fb);box-shadow:inset 1px 0 0 #e8f1fd;"></div>
<div class="r" style="left:217px;top:53px;width:73px;height:46px;border-right:1px solid #a9c2da;border-bottom:1px solid #a9c2da;background:linear-gradient(#e2edfc,#d4e5fb);box-shadow:inset 1px 0 0 #e8f1fd;overflow:hidden;">
<div class="r" style="left:1px;top:9px;width:76px;height:28px;background:#fff;border:1px solid #767676;border-radius:2px;"></div>
</div>
<div class="t hd" style="left:217px;top:10px;width:72px;">Categoría</div>
<div class="r" style="left:290px;top:0;width:72px;height:53px;border-right:1px solid #a9c2da;border-bottom:1px solid #a9c2da;background:linear-gradient(#e2edfc,#d4e5fb);box-shadow:inset 1px 0 0 #e8f1fd;"></div>
<div class="r" style="left:290px;top:53px;width:72px;height:46px;border-right:1px solid #a9c2da;border-bottom:1px solid #a9c2da;background:linear-gradient(#e2edfc,#d4e5fb);box-shadow:inset 1px 0 0 #e8f1fd;overflow:hidden;">
<div class="r" style="left:1px;top:9px;width:76px;height:28px;background:#fff;border:1px solid #767676;border-radius:2px;"></div>
</div>
<div class="t hd" style="left:290px;top:10px;width:71px;">Ruta<br>Categoría</div>
<div class="r" style="left:362px;top:0;width:72px;height:53px;border-right:1px solid #a9c2da;border-bottom:1px solid #a9c2da;background:linear-gradient(#e2edfc,#d4e5fb);box-shadow:inset 1px 0 0 #e8f1fd;"></div>
<div class="r" style="left:362px;top:53px;width:72px;height:46px;border-right:1px solid #a9c2da;border-bottom:1px solid #a9c2da;background:linear-gradient(#e2edfc,#d4e5fb);box-shadow:inset 1px 0 0 #e8f1fd;overflow:hidden;">
<div class="r" style="left:1px;top:9px;width:76px;height:28px;background:#fff;border:1px solid #767676;border-radius:2px;"></div>
</div>
<div class="t hd" style="left:362px;top:10px;width:71px;">Crítico</div>
<div class="r" style="left:434px;top:0;width:108px;height:53px;border-right:1px solid #a9c2da;border-bottom:1px solid #a9c2da;background:linear-gradient(#e2edfc,#d4e5fb);box-shadow:inset 1px 0 0 #e8f1fd;"></div>
<div class="r" style="left:434px;top:53px;width:108px;height:46px;border-right:1px solid #a9c2da;border-bottom:1px solid #a9c2da;background:linear-gradient(#e2edfc,#d4e5fb);box-shadow:inset 1px 0 0 #e8f1fd;overflow:hidden;">
<div class="r" style="left:1px;top:9px;width:105px;height:28px;background:#fff;border:1px solid #767676;border-radius:2px;"></div>
</div>
<div class="t hd" style="left:434px;top:10px;width:107px;">Propietario</div>
<div class="r" style="left:542px;top:0;width:73px;height:53px;border-right:1px solid #a9c2da;border-bottom:1px solid #a9c2da;background:linear-gradient(#e2edfc,#d4e5fb);box-shadow:inset 1px 0 0 #e8f1fd;"></div>
<div class="r" style="left:542px;top:53px;width:73px;height:46px;border-right:1px solid #a9c2da;border-bottom:1px solid #a9c2da;background:linear-gradient(#e2edfc,#d4e5fb);box-shadow:inset 1px 0 0 #e8f1fd;overflow:hidden;">
<div class="r" style="left:1px;top:9px;width:76px;height:28px;background:#fff;border:1px solid #767676;border-radius:2px;"></div>
</div>
<div class="t hd" style="left:542px;top:10px;width:72px;">Versión</div>
<div class="r" style="left:615px;top:0;width:72px;height:53px;border-right:1px solid #a9c2da;border-bottom:1px solid #a9c2da;background:linear-gradient(#e2edfc,#d4e5fb);box-shadow:inset 1px 0 0 #e8f1fd;"></div>
<div class="r" style="left:615px;top:53px;width:72px;height:46px;border-right:1px solid #a9c2da;border-bottom:1px solid #a9c2da;background:linear-gradient(#e2edfc,#d4e5fb);box-shadow:inset 1px 0 0 #e8f1fd;overflow:hidden;">
<div class="r" style="left:1px;top:9px;width:76px;height:28px;background:#fff;border:1px solid #767676;border-radius:2px;"></div>
</div>
<div class="t hd" style="left:615px;top:10px;width:71px;">Unidades</div>
<div class="r" style="left:687px;top:0;width:41px;height:53px;border-bottom:1px solid #a9c2da;background:linear-gradient(#e2edfc,#d4e5fb);box-shadow:inset 1px 0 0 #e8f1fd;"></div>
<div class="r" style="left:687px;top:53px;width:41px;height:46px;border-bottom:1px solid #a9c2da;background:linear-gradient(#e2edfc,#d4e5fb);box-shadow:inset 1px 0 0 #e8f1fd;overflow:hidden;">
<div class="r" style="left:1px;top:9px;width:76px;height:28px;background:#fff;border:1px solid #767676;border-radius:2px;"></div>
</div>
<div class="t hd" style="left:687px;top:10px;width:40px;">Marca</div>
</div>
<svg class="s" style="left:762.2px;top:201.5px" width="15" height="15" viewBox="0 0 15 15">
<circle cx="7.5" cy="7.5" r="5.7" fill="#fff"/>
<path d="M3.5,11.5 A5.7,5.7 0 0 1 11.5,3.5" fill="none" stroke="#161616" stroke-width="2"/>
<path d="M11.5,3.5 A5.7,5.7 0 0 1 3.5,11.5" fill="none" stroke="#cfcfcf" stroke-width="1.5"/>
</svg>
<svg class="s" style="left:791px;top:192px" width="33" height="30" viewBox="0 0 33 30">
<defs><linearGradient id="swg" x1="0" y1="0" x2="0" y2="1"><stop offset="0" stop-color="#8ccc88"/><stop offset="0.35" stop-color="#58ab5a"/><stop offset="1" stop-color="#2f8a3c"/></linearGradient></defs>
<rect x="3" y="3.5" width="2.2" height="24" fill="#d4d4d4"/>
<rect x="5" y="7.5" width="3" height="6.5" fill="#f4f4f4"/>
<rect x="5.8" y="7.8" width="27" height="16.2" fill="url(#swg)"/>
<rect x="20" y="24" width="13" height="3.6" fill="#c9c46a"/>
<ellipse cx="13" cy="11.5" rx="1.7" ry="2" fill="#2a1620"/><ellipse cx="19.5" cy="11.5" rx="1.5" ry="2" fill="#2a1620"/><ellipse cx="26" cy="11.5" rx="1.7" ry="2" fill="#2a1620"/>
<circle cx="11" cy="17.3" r="0.9" fill="#6a4a30"/><circle cx="16.5" cy="17.5" r="0.9" fill="#6a4a30"/><circle cx="22.7" cy="17.5" r="0.9" fill="#4a2a30"/><circle cx="30" cy="17.5" r="0.9" fill="#6a4a30"/><circle cx="11" cy="21.5" r="0.9" fill="#6a4a30"/><circle cx="30" cy="20.5" r="0.9" fill="#6a4a30"/>
<rect x="5" y="16" width="3.4" height="3.2" fill="#1e1a14"/>
<path d="M5,19.5 L9.5,19.5 L9.5,25.5 L7.5,24.5 L5.5,26.5 Z" fill="#1f86ee"/>
</svg>
<div class="t" style="left:830.1px;top:200.15px;font-size:14px;line-height:14px;color:#262626;width:139.89999999999998px;overflow:hidden;letter-spacing:-0.1px;">Switch 4</div>
<div class="t" style="left:976.1px;top:200.15px;font-size:14px;line-height:14px;color:#262626;width:67.89999999999998px;overflow:hidden;letter-spacing:-0.1px;">Switches</div>
<div class="t" style="left:1050.1px;top:200.15px;font-size:14px;line-height:14px;color:#262626;width:65.90000000000009px;overflow:hidden;letter-spacing:-0.1px;">Comunicaciones</div>
<div class="t" style="left:1122.1px;top:200.15px;font-size:14px;line-height:14px;color:#262626;width:65.90000000000009px;overflow:hidden;letter-spacing:-0.1px;">Sí</div>
<div class="t" style="left:1302.1px;top:200.15px;font-size:14px;line-height:14px;color:#262626;width:66.90000000000009px;overflow:hidden;letter-spacing:-0.1px;">1.0</div>
<div class="t" style="left:1375.1px;top:200.15px;font-size:14px;line-height:14px;color:#262626;width:65.90000000000009px;overflow:hidden;letter-spacing:-0.1px;">1</div>
<div class="t" style="left:1447.1px;top:200.15px;font-size:14px;line-height:14px;color:#262626;width:31.90000000000009px;overflow:hidden;letter-spacing:-0.1px;">Cisco</div>
<div class="r" style="left:752px;top:231px;width:35px;height:40px;background:#e9f1fd;"></div>
<div class="r" style="left:788px;top:231px;width:36px;height:40px;background:#e9f1fd;"></div>
<div class="r" style="left:825px;top:231px;width:145px;height:40px;background:#e9f1fd;"></div>
<div class="r" style="left:971px;top:231px;width:73px;height:40px;background:#e9f1fd;"></div>
<div class="r" style="left:1045px;top:231px;width:71px;height:40px;background:#e9f1fd;"></div>
<div class="r" style="left:1117px;top:231px;width:71px;height:40px;background:#e9f1fd;"></div>
<div class="r" style="left:1189px;top:231px;width:107px;height:40px;background:#e9f1fd;"></div>
<div class="r" style="left:1297px;top:231px;width:72px;height:40px;background:#e9f1fd;"></div>
<div class="r" style="left:1370px;top:231px;width:71px;height:40px;background:#e9f1fd;"></div>
<div class="r" style="left:1442px;top:231px;width:37px;height:40px;background:#e9f1fd;"></div>
<svg class="s" style="left:762.2px;top:243.5px" width="15" height="15" viewBox="0 0 15 15">
<circle cx="7.5" cy="7.5" r="5.7" fill="#fff"/>
<path d="M3.5,11.5 A5.7,5.7 0 0 1 11.5,3.5" fill="none" stroke="#161616" stroke-width="2"/>
<path d="M11.5,3.5 A5.7,5.7 0 0 1 3.5,11.5" fill="none" stroke="#cfcfcf" stroke-width="1.5"/>
</svg>
<svg class="s" style="left:791px;top:234px" width="33" height="30" viewBox="0 0 33 30">
<defs><linearGradient id="swg" x1="0" y1="0" x2="0" y2="1"><stop offset="0" stop-color="#8ccc88"/><stop offset="0.35" stop-color="#58ab5a"/><stop offset="1" stop-color="#2f8a3c"/></linearGradient></defs>
<rect x="3" y="3.5" width="2.2" height="24" fill="#d4d4d4"/>
<rect x="5" y="7.5" width="3" height="6.5" fill="#f4f4f4"/>
<rect x="5.8" y="7.8" width="27" height="16.2" fill="url(#swg)"/>
<rect x="20" y="24" width="13" height="3.6" fill="#c9c46a"/>
<ellipse cx="13" cy="11.5" rx="1.7" ry="2" fill="#2a1620"/><ellipse cx="19.5" cy="11.5" rx="1.5" ry="2" fill="#2a1620"/><ellipse cx="26" cy="11.5" rx="1.7" ry="2" fill="#2a1620"/>
<circle cx="11" cy="17.3" r="0.9" fill="#6a4a30"/><circle cx="16.5" cy="17.5" r="0.9" fill="#6a4a30"/><circle cx="22.7" cy="17.5" r="0.9" fill="#4a2a30"/><circle cx="30" cy="17.5" r="0.9" fill="#6a4a30"/><circle cx="11" cy="21.5" r="0.9" fill="#6a4a30"/><circle cx="30" cy="20.5" r="0.9" fill="#6a4a30"/>
<rect x="5" y="16" width="3.4" height="3.2" fill="#1e1a14"/>
<path d="M5,19.5 L9.5,19.5 L9.5,25.5 L7.5,24.5 L5.5,26.5 Z" fill="#1f86ee"/>
</svg>
<div class="t" style="left:830.1px;top:242.15px;font-size:14px;line-height:14px;color:#262626;width:139.89999999999998px;overflow:hidden;letter-spacing:-0.1px;">Switch 3</div>
<div class="t" style="left:976.1px;top:242.15px;font-size:14px;line-height:14px;color:#262626;width:67.89999999999998px;overflow:hidden;letter-spacing:-0.1px;">Switches</div>
<div class="t" style="left:1050.1px;top:242.15px;font-size:14px;line-height:14px;color:#262626;width:65.90000000000009px;overflow:hidden;letter-spacing:-0.1px;">Comunicaciones</div>
<div class="t" style="left:1122.1px;top:242.15px;font-size:14px;line-height:14px;color:#262626;width:65.90000000000009px;overflow:hidden;letter-spacing:-0.1px;">Sí</div>
<div class="t" style="left:1302.1px;top:242.15px;font-size:14px;line-height:14px;color:#262626;width:66.90000000000009px;overflow:hidden;letter-spacing:-0.1px;">1.0</div>
<div class="t" style="left:1375.1px;top:242.15px;font-size:14px;line-height:14px;color:#262626;width:65.90000000000009px;overflow:hidden;letter-spacing:-0.1px;">1</div>
<div class="t" style="left:1447.1px;top:242.15px;font-size:14px;line-height:14px;color:#262626;width:31.90000000000009px;overflow:hidden;letter-spacing:-0.1px;">Cisco</div>
<svg class="s" style="left:762.2px;top:285.5px" width="15" height="15" viewBox="0 0 15 15">
<circle cx="7.5" cy="7.5" r="5.7" fill="#fff"/>
<path d="M3.5,11.5 A5.7,5.7 0 0 1 11.5,3.5" fill="none" stroke="#161616" stroke-width="2"/>
<path d="M11.5,3.5 A5.7,5.7 0 0 1 3.5,11.5" fill="none" stroke="#cfcfcf" stroke-width="1.5"/>
</svg>
<svg class="s" style="left:791px;top:272px" width="33" height="42" viewBox="0 0 33 42">
<defs><linearGradient id="avg" x1="0" y1="0" x2="0" y2="1"><stop offset="0" stop-color="#55cc55"/><stop offset="1" stop-color="#3b983d"/></linearGradient>
<linearGradient id="avf" x1="0" y1="0" x2="0" y2="1"><stop offset="0" stop-color="#4fd24f"/><stop offset="1" stop-color="#46b846"/></linearGradient>
<linearGradient id="avs" x1="0" y1="0" x2="1" y2="0"><stop offset="0" stop-color="#ffffff" stop-opacity="0"/><stop offset="0.55" stop-color="#c4c4c4"/><stop offset="1" stop-color="#808080"/></linearGradient>
<filter id="avb" x="-50%" y="-50%" width="200%" height="200%"><feGaussianBlur stdDeviation="1.1"/></filter></defs>
<path d="M3,24.5 L12.5,23.5 L12.5,37.5 L5,37 Z" fill="url(#avs)" filter="url(#avb)"/>
<path d="M12,6.2 L32,3.2 L32,37.8 L27.5,37.8 L27,33.5 L12,36.5 Z" fill="url(#avg)"/>
<path d="M23,9 L26,8 L26,24 L27.5,25.5 L27.5,33.5 L23,33.5 Z" fill="#2c7a30"/>
<path d="M26,7.5 L32,3.5 L32,37.5 L27.5,37.8 L27.5,25.5 L26,24 Z" fill="url(#avf)"/>
<rect x="12" y="26" width="1" height="9" fill="#e6f2ea"/>
</svg>
<div class="t" style="left:830.1px;top:284.15px;font-size:14px;line-height:14px;color:#262626;width:139.89999999999998px;overflow:hidden;letter-spacing:-0.1px;">Antivirus</div>
<div class="t" style="left:976.1px;top:284.15px;font-size:14px;line-height:14px;color:#262626;width:67.89999999999998px;overflow:hidden;letter-spacing:-0.1px;">Antivirus</div>
<div class="t" style="left:1050.1px;top:284.15px;font-size:14px;line-height:14px;color:#262626;width:65.90000000000009px;overflow:hidden;letter-spacing:-0.1px;">Software</div>
<div class="t" style="left:1122.1px;top:284.15px;font-size:14px;line-height:14px;color:#262626;width:65.90000000000009px;overflow:hidden;letter-spacing:-0.1px;">Sí</div>
<div class="t" style="left:1375.1px;top:284.15px;font-size:14px;line-height:14px;color:#262626;width:65.90000000000009px;overflow:hidden;letter-spacing:-0.1px;">27</div>
<div class="t" style="left:1447.1px;top:284.15px;font-size:14px;line-height:14px;color:#262626;width:31.90000000000009px;overflow:hidden;letter-spacing:-0.1px;">Kaspersky</div>
<div class="r" style="left:752px;top:315px;width:35px;height:40px;background:#e9f1fd;"></div>
<div class="r" style="left:788px;top:315px;width:36px;height:40px;background:#e9f1fd;"></div>
<div class="r" style="left:825px;top:315px;width:145px;height:40px;background:#e9f1fd;"></div>
<div class="r" style="left:971px;top:315px;width:73px;height:40px;background:#e9f1fd;"></div>
<div class="r" style="left:1045px;top:315px;width:71px;height:40px;background:#e9f1fd;"></div>
<div class="r" style="left:1117px;top:315px;width:71px;height:40px;background:#e9f1fd;"></div>
<div class="r" style="left:1189px;top:315px;width:107px;height:40px;background:#e9f1fd;"></div>
<div class="r" style="left:1297px;top:315px;width:72px;height:40px;background:#e9f1fd;"></div>
<div class="r" style="left:1370px;top:315px;width:71px;height:40px;background:#e9f1fd;"></div>
<div class="r" style="left:1442px;top:315px;width:37px;height:40px;background:#e9f1fd;"></div>
<svg class="s" style="left:762.2px;top:327.5px" width="15" height="15" viewBox="0 0 15 15">
<circle cx="7.5" cy="7.5" r="5.7" fill="#fff"/>
<path d="M3.5,11.5 A5.7,5.7 0 0 1 11.5,3.5" fill="none" stroke="#161616" stroke-width="2"/>
<path d="M11.5,3.5 A5.7,5.7 0 0 1 3.5,11.5" fill="none" stroke="#cfcfcf" stroke-width="1.5"/>
</svg>
<svg class="s" style="left:791px;top:314px" width="33" height="42" viewBox="0 0 33 42">
<defs><linearGradient id="svg1" x1="0" y1="0" x2="0" y2="1"><stop offset="0" stop-color="#5a9cff"/><stop offset="0.3" stop-color="#1a3af2"/><stop offset="1" stop-color="#1228d8"/></linearGradient>
<linearGradient id="svside" x1="0" y1="0" x2="0" y2="1"><stop offset="0" stop-color="#2a4aa8"/><stop offset="0.45" stop-color="#2456e6"/><stop offset="1" stop-color="#2a4aa8"/></linearGradient>
<linearGradient id="svsh" x1="0" y1="0" x2="0" y2="1"><stop offset="0" stop-color="#8a8a8a"/><stop offset="1" stop-color="#d8d8d8" stop-opacity="0.3"/></linearGradient></defs>
<path d="M19,26 L28,26 L26,36 L19,36 Z" fill="url(#svsh)"/>
<path d="M3.8,3.3 L6,4 L6,37 L3.8,37.5 Z" fill="#2c4c9c"/>
<rect x="6" y="4" width="10" height="2.5" fill="#1d1e26"/>
<rect x="6" y="6.5" width="10" height="28" fill="#464a5a"/>
<rect x="6" y="34" width="10" height="2.5" fill="#1d1e26"/>
<rect x="6" y="13" width="10" height="0.6" fill="#55576a"/><rect x="6" y="17" width="10" height="0.6" fill="#55576a"/>
<circle cx="13.3" cy="9.8" r="0.9" fill="#3a70f5"/><circle cx="13.3" cy="13.6" r="0.9" fill="#3a70f5"/>
<circle cx="10.5" cy="27.4" r="2.6" fill="#1b1c22"/><circle cx="11.2" cy="27" r="0.9" fill="#8a9a8a"/>
<path d="M16,3 L18,3 L22,13 L22,28 L18,38 L16,38 Z" fill="url(#svside)"/>
<path d="M22,15.5 C22,12.5 24.5,12 27,12 L32,12 L32,27.6 L27,27.6 C24,27.6 22,26.5 22,23.5 Z" fill="url(#svg1)"/>
<path d="M22.5,16.5 C25,15.5 28,15.5 32,16.2 L32,17.5 C28,17 25,17 22.5,17.8 Z" fill="#6aaaff" opacity="0.8"/>
</svg>
<div class="t" style="left:830.1px;top:326.15px;font-size:14px;line-height:14px;color:#262626;width:139.89999999999998px;overflow:hidden;letter-spacing:-0.1px;">server.local</div>
<div class="t" style="left:976.1px;top:326.15px;font-size:14px;line-height:14px;color:#262626;width:67.89999999999998px;overflow:hidden;letter-spacing:-0.1px;">Máquina Virtual</div>
<div class="t" style="left:1050.1px;top:326.15px;font-size:14px;line-height:14px;color:#262626;width:65.90000000000009px;overflow:hidden;letter-spacing:-0.1px;">Software</div>
<div class="t" style="left:1122.1px;top:326.15px;font-size:14px;line-height:14px;color:#262626;width:65.90000000000009px;overflow:hidden;letter-spacing:-0.1px;">Sí</div>
<div class="t" style="left:1375.1px;top:326.15px;font-size:14px;line-height:14px;color:#262626;width:65.90000000000009px;overflow:hidden;letter-spacing:-0.1px;">1</div>
<svg class="s" style="left:762.2px;top:369.5px" width="15" height="15" viewBox="0 0 15 15">
<circle cx="7.5" cy="7.5" r="5.7" fill="#fff"/>
<path d="M3.5,11.5 A5.7,5.7 0 0 1 11.5,3.5" fill="none" stroke="#161616" stroke-width="2"/>
<path d="M11.5,3.5 A5.7,5.7 0 0 1 3.5,11.5" fill="none" stroke="#cfcfcf" stroke-width="1.5"/>
</svg>
<svg class="s" style="left:791px;top:356px" width="33" height="42" viewBox="0 0 33 42">
<defs><linearGradient id="svg1" x1="0" y1="0" x2="0" y2="1"><stop offset="0" stop-color="#5a9cff"/><stop offset="0.3" stop-color="#1a3af2"/><stop offset="1" stop-color="#1228d8"/></linearGradient>
<linearGradient id="svside" x1="0" y1="0" x2="0" y2="1"><stop offset="0" stop-color="#2a4aa8"/><stop offset="0.45" stop-color="#2456e6"/><stop offset="1" stop-color="#2a4aa8"/></linearGradient>
<linearGradient id="svsh" x1="0" y1="0" x2="0" y2="1"><stop offset="0" stop-color="#8a8a8a"/><stop offset="1" stop-color="#d8d8d8" stop-opacity="0.3"/></linearGradient></defs>
<path d="M19,26 L28,26 L26,36 L19,36 Z" fill="url(#svsh)"/>
<path d="M3.8,3.3 L6,4 L6,37 L3.8,37.5 Z" fill="#2c4c9c"/>
<rect x="6" y="4" width="10" height="2.5" fill="#1d1e26"/>
<rect x="6" y="6.5" width="10" height="28" fill="#464a5a"/>
<rect x="6" y="34" width="10" height="2.5" fill="#1d1e26"/>
<rect x="6" y="13" width="10" height="0.6" fill="#55576a"/><rect x="6" y="17" width="10" height="0.6" fill="#55576a"/>
<circle cx="13.3" cy="9.8" r="0.9" fill="#3a70f5"/><circle cx="13.3" cy="13.6" r="0.9" fill="#3a70f5"/>
<circle cx="10.5" cy="27.4" r="2.6" fill="#1b1c22"/><circle cx="11.2" cy="27" r="0.9" fill="#8a9a8a"/>
<path d="M16,3 L18,3 L22,13 L22,28 L18,38 L16,38 Z" fill="url(#svside)"/>
<path d="M22,15.5 C22,12.5 24.5,12 27,12 L32,12 L32,27.6 L27,27.6 C24,27.6 22,26.5 22,23.5 Z" fill="url(#svg1)"/>
<path d="M22.5,16.5 C25,15.5 28,15.5 32,16.2 L32,17.5 C28,17 25,17 22.5,17.8 Z" fill="#6aaaff" opacity="0.8"/>
</svg>
<div class="t" style="left:830.1px;top:368.15px;font-size:14px;line-height:14px;color:#262626;width:139.89999999999998px;overflow:hidden;letter-spacing:-0.1px;">Balanceador</div>
<div class="t" style="left:976.1px;top:368.15px;font-size:14px;line-height:14px;color:#262626;width:67.89999999999998px;overflow:hidden;letter-spacing:-0.1px;">Máquina Virtual</div>
<div class="t" style="left:1050.1px;top:368.15px;font-size:14px;line-height:14px;color:#262626;width:65.90000000000009px;overflow:hidden;letter-spacing:-0.1px;">Software</div>
<div class="t" style="left:1122.1px;top:368.15px;font-size:14px;line-height:14px;color:#262626;width:65.90000000000009px;overflow:hidden;letter-spacing:-0.1px;">Sí</div>
<div class="t" style="left:1302.1px;top:368.15px;font-size:14px;line-height:14px;color:#262626;width:66.90000000000009px;overflow:hidden;letter-spacing:-0.1px;">23.d</div>
<div class="t" style="left:1375.1px;top:368.15px;font-size:14px;line-height:14px;color:#262626;width:65.90000000000009px;overflow:hidden;letter-spacing:-0.1px;">1</div>
<div class="t" style="left:1447.1px;top:368.15px;font-size:14px;line-height:14px;color:#262626;width:31.90000000000009px;overflow:hidden;letter-spacing:-0.1px;">Debian</div>
<div class="r" style="left:752px;top:399px;width:35px;height:40px;background:#e9f1fd;"></div>
<div class="r" style="left:788px;top:399px;width:36px;height:40px;background:#e9f1fd;"></div>
<div class="r" style="left:825px;top:399px;width:145px;height:40px;background:#e9f1fd;"></div>
<div class="r" style="left:971px;top:399px;width:73px;height:40px;background:#e9f1fd;"></div>
<div class="r" style="left:1045px;top:399px;width:71px;height:40px;background:#e9f1fd;"></div>
<div class="r" style="left:1117px;top:399px;width:71px;height:40px;background:#e9f1fd;"></div>
<div class="r" style="left:1189px;top:399px;width:107px;height:40px;background:#e9f1fd;"></div>
<div class="r" style="left:1297px;top:399px;width:72px;height:40px;background:#e9f1fd;"></div>
<div class="r" style="left:1370px;top:399px;width:71px;height:40px;background:#e9f1fd;"></div>
<div class="r" style="left:1442px;top:399px;width:37px;height:40px;background:#e9f1fd;"></div>
<svg class="s" style="left:762.2px;top:411.5px" width="15" height="15" viewBox="0 0 15 15">
<circle cx="7.5" cy="7.5" r="5.7" fill="#fff"/>
<path d="M3.5,11.5 A5.7,5.7 0 0 1 11.5,3.5" fill="none" stroke="#161616" stroke-width="2"/>
<path d="M11.5,3.5 A5.7,5.7 0 0 1 3.5,11.5" fill="none" stroke="#cfcfcf" stroke-width="1.5"/>
</svg>
<svg class="s" style="left:791px;top:398px" width="33" height="42" viewBox="0 0 33 42">
<defs><linearGradient id="svg1" x1="0" y1="0" x2="0" y2="1"><stop offset="0" stop-color="#5a9cff"/><stop offset="0.3" stop-color="#1a3af2"/><stop offset="1" stop-color="#1228d8"/></linearGradient>
<linearGradient id="svside" x1="0" y1="0" x2="0" y2="1"><stop offset="0" stop-color="#2a4aa8"/><stop offset="0.45" stop-color="#2456e6"/><stop offset="1" stop-color="#2a4aa8"/></linearGradient>
<linearGradient id="svsh" x1="0" y1="0" x2="0" y2="1"><stop offset="0" stop-color="#8a8a8a"/><stop offset="1" stop-color="#d8d8d8" stop-opacity="0.3"/></linearGradient></defs>
<path d="M19,26 L28,26 L26,36 L19,36 Z" fill="url(#svsh)"/>
<path d="M3.8,3.3 L6,4 L6,37 L3.8,37.5 Z" fill="#2c4c9c"/>
<rect x="6" y="4" width="10" height="2.5" fill="#1d1e26"/>
<rect x="6" y="6.5" width="10" height="28" fill="#464a5a"/>
<rect x="6" y="34" width="10" height="2.5" fill="#1d1e26"/>
<rect x="6" y="13" width="10" height="0.6" fill="#55576a"/><rect x="6" y="17" width="10" height="0.6" fill="#55576a"/>
<circle cx="13.3" cy="9.8" r="0.9" fill="#3a70f5"/><circle cx="13.3" cy="13.6" r="0.9" fill="#3a70f5"/>
<circle cx="10.5" cy="27.4" r="2.6" fill="#1b1c22"/><circle cx="11.2" cy="27" r="0.9" fill="#8a9a8a"/>
<path d="M16,3 L18,3 L22,13 L22,28 L18,38 L16,38 Z" fill="url(#svside)"/>
<path d="M22,15.5 C22,12.5 24.5,12 27,12 L32,12 L32,27.6 L27,27.6 C24,27.6 22,26.5 22,23.5 Z" fill="url(#svg1)"/>
<path d="M22.5,16.5 C25,15.5 28,15.5 32,16.2 L32,17.5 C28,17 25,17 22.5,17.8 Z" fill="#6aaaff" opacity="0.8"/>
</svg>
<div class="t" style="left:830.1px;top:410.15px;font-size:14px;line-height:14px;color:#262626;width:139.89999999999998px;overflow:hidden;letter-spacing:-0.1px;">server2.local</div>
<div class="t" style="left:976.1px;top:410.15px;font-size:14px;line-height:14px;color:#262626;width:67.89999999999998px;overflow:hidden;letter-spacing:-0.1px;">Máquina Virtual</div>
<div class="t" style="left:1050.1px;top:410.15px;font-size:14px;line-height:14px;color:#262626;width:65.90000000000009px;overflow:hidden;letter-spacing:-0.1px;">Software</div>
<div class="t" style="left:1122.1px;top:410.15px;font-size:14px;line-height:14px;color:#262626;width:65.90000000000009px;overflow:hidden;letter-spacing:-0.1px;">Sí</div>
<div class="t" style="left:1375.1px;top:410.15px;font-size:14px;line-height:14px;color:#262626;width:65.90000000000009px;overflow:hidden;letter-spacing:-0.1px;">1</div>
<svg class="s" style="left:762.2px;top:453.5px" width="15" height="15" viewBox="0 0 15 15">
<circle cx="7.5" cy="7.5" r="5.7" fill="#fff"/>
<path d="M3.5,11.5 A5.7,5.7 0 0 1 11.5,3.5" fill="none" stroke="#161616" stroke-width="2"/>
<path d="M11.5,3.5 A5.7,5.7 0 0 1 3.5,11.5" fill="none" stroke="#cfcfcf" stroke-width="1.5"/>
</svg>
<svg class="s" style="left:791px;top:440px" width="33" height="42" viewBox="0 0 33 42">
<defs><linearGradient id="svg1" x1="0" y1="0" x2="0" y2="1"><stop offset="0" stop-color="#5a9cff"/><stop offset="0.3" stop-color="#1a3af2"/><stop offset="1" stop-color="#1228d8"/></linearGradient>
<linearGradient id="svside" x1="0" y1="0" x2="0" y2="1"><stop offset="0" stop-color="#2a4aa8"/><stop offset="0.45" stop-color="#2456e6"/><stop offset="1" stop-color="#2a4aa8"/></linearGradient>
<linearGradient id="svsh" x1="0" y1="0" x2="0" y2="1"><stop offset="0" stop-color="#8a8a8a"/><stop offset="1" stop-color="#d8d8d8" stop-opacity="0.3"/></linearGradient></defs>
<path d="M19,26 L28,26 L26,36 L19,36 Z" fill="url(#svsh)"/>
<path d="M3.8,3.3 L6,4 L6,37 L3.8,37.5 Z" fill="#2c4c9c"/>
<rect x="6" y="4" width="10" height="2.5" fill="#1d1e26"/>
<rect x="6" y="6.5" width="10" height="28" fill="#464a5a"/>
<rect x="6" y="34" width="10" height="2.5" fill="#1d1e26"/>
<rect x="6" y="13" width="10" height="0.6" fill="#55576a"/><rect x="6" y="17" width="10" height="0.6" fill="#55576a"/>
<circle cx="13.3" cy="9.8" r="0.9" fill="#3a70f5"/><circle cx="13.3" cy="13.6" r="0.9" fill="#3a70f5"/>
<circle cx="10.5" cy="27.4" r="2.6" fill="#1b1c22"/><circle cx="11.2" cy="27" r="0.9" fill="#8a9a8a"/>
<path d="M16,3 L18,3 L22,13 L22,28 L18,38 L16,38 Z" fill="url(#svside)"/>
<path d="M22,15.5 C22,12.5 24.5,12 27,12 L32,12 L32,27.6 L27,27.6 C24,27.6 22,26.5 22,23.5 Z" fill="url(#svg1)"/>
<path d="M22.5,16.5 C25,15.5 28,15.5 32,16.2 L32,17.5 C28,17 25,17 22.5,17.8 Z" fill="#6aaaff" opacity="0.8"/>
</svg>
<div class="t" style="left:830.1px;top:452.15px;font-size:14px;line-height:14px;color:#262626;width:139.89999999999998px;overflow:hidden;letter-spacing:-0.1px;">Balanceador respaldo</div>
<div class="t" style="left:976.1px;top:452.15px;font-size:14px;line-height:14px;color:#262626;width:67.89999999999998px;overflow:hidden;letter-spacing:-0.1px;">Máquina Virtual</div>
<div class="t" style="left:1050.1px;top:452.15px;font-size:14px;line-height:14px;color:#262626;width:65.90000000000009px;overflow:hidden;letter-spacing:-0.1px;">Software</div>
<div class="t" style="left:1122.1px;top:452.15px;font-size:14px;line-height:14px;color:#262626;width:65.90000000000009px;overflow:hidden;letter-spacing:-0.1px;">Sí</div>
<div class="t" style="left:1302.1px;top:452.15px;font-size:14px;line-height:14px;color:#262626;width:66.90000000000009px;overflow:hidden;letter-spacing:-0.1px;">343</div>
<div class="t" style="left:1375.1px;top:452.15px;font-size:14px;line-height:14px;color:#262626;width:65.90000000000009px;overflow:hidden;letter-spacing:-0.1px;">43</div>
<div class="t" style="left:1447.1px;top:452.15px;font-size:14px;line-height:14px;color:#262626;width:31.90000000000009px;overflow:hidden;letter-spacing:-0.1px;">Debian</div>
<div class="r" style="left:752px;top:483px;width:35px;height:40px;background:#e9f1fd;"></div>
<div class="r" style="left:788px;top:483px;width:36px;height:40px;background:#e9f1fd;"></div>
<div class="r" style="left:825px;top:483px;width:145px;height:40px;background:#e9f1fd;"></div>
<div class="r" style="left:971px;top:483px;width:73px;height:40px;background:#e9f1fd;"></div>
<div class="r" style="left:1045px;top:483px;width:71px;height:40px;background:#e9f1fd;"></div>
<div class="r" style="left:1117px;top:483px;width:71px;height:40px;background:#e9f1fd;"></div>
<div class="r" style="left:1189px;top:483px;width:107px;height:40px;background:#e9f1fd;"></div>
<div class="r" style="left:1297px;top:483px;width:72px;height:40px;background:#e9f1fd;"></div>
<div class="r" style="left:1370px;top:483px;width:71px;height:40px;background:#e9f1fd;"></div>
<div class="r" style="left:1442px;top:483px;width:37px;height:40px;background:#e9f1fd;"></div>
<svg class="s" style="left:762.2px;top:495.5px" width="15" height="15" viewBox="0 0 15 15">
<circle cx="7.5" cy="7.5" r="5.7" fill="#fff"/>
<path d="M3.5,11.5 A5.7,5.7 0 0 1 11.5,3.5" fill="none" stroke="#161616" stroke-width="2"/>
<path d="M11.5,3.5 A5.7,5.7 0 0 1 3.5,11.5" fill="none" stroke="#cfcfcf" stroke-width="1.5"/>
</svg>
<svg class="s" style="left:791px;top:482px" width="33" height="42" viewBox="0 0 33 42">
<defs><linearGradient id="svg1" x1="0" y1="0" x2="0" y2="1"><stop offset="0" stop-color="#5a9cff"/><stop offset="0.3" stop-color="#1a3af2"/><stop offset="1" stop-color="#1228d8"/></linearGradient>
<linearGradient id="svside" x1="0" y1="0" x2="0" y2="1"><stop offset="0" stop-color="#2a4aa8"/><stop offset="0.45" stop-color="#2456e6"/><stop offset="1" stop-color="#2a4aa8"/></linearGradient>
<linearGradient id="svsh" x1="0" y1="0" x2="0" y2="1"><stop offset="0" stop-color="#8a8a8a"/><stop offset="1" stop-color="#d8d8d8" stop-opacity="0.3"/></linearGradient></defs>
<path d="M19,26 L28,26 L26,36 L19,36 Z" fill="url(#svsh)"/>
<path d="M3.8,3.3 L6,4 L6,37 L3.8,37.5 Z" fill="#2c4c9c"/>
<rect x="6" y="4" width="10" height="2.5" fill="#1d1e26"/>
<rect x="6" y="6.5" width="10" height="28" fill="#464a5a"/>
<rect x="6" y="34" width="10" height="2.5" fill="#1d1e26"/>
<rect x="6" y="13" width="10" height="0.6" fill="#55576a"/><rect x="6" y="17" width="10" height="0.6" fill="#55576a"/>
<circle cx="13.3" cy="9.8" r="0.9" fill="#3a70f5"/><circle cx="13.3" cy="13.6" r="0.9" fill="#3a70f5"/>
<circle cx="10.5" cy="27.4" r="2.6" fill="#1b1c22"/><circle cx="11.2" cy="27" r="0.9" fill="#8a9a8a"/>
<path d="M16,3 L18,3 L22,13 L22,28 L18,38 L16,38 Z" fill="url(#svside)"/>
<path d="M22,15.5 C22,12.5 24.5,12 27,12 L32,12 L32,27.6 L27,27.6 C24,27.6 22,26.5 22,23.5 Z" fill="url(#svg1)"/>
<path d="M22.5,16.5 C25,15.5 28,15.5 32,16.2 L32,17.5 C28,17 25,17 22.5,17.8 Z" fill="#6aaaff" opacity="0.8"/>
</svg>
<div class="t" style="left:830.1px;top:494.15px;font-size:14px;line-height:14px;color:#262626;width:139.89999999999998px;overflow:hidden;letter-spacing:-0.1px;">H1-nodo-A</div>
<div class="t" style="left:976.1px;top:494.15px;font-size:14px;line-height:14px;color:#262626;width:67.89999999999998px;overflow:hidden;letter-spacing:-0.1px;">Máquina Virtual</div>
<div class="t" style="left:1050.1px;top:494.15px;font-size:14px;line-height:14px;color:#262626;width:65.90000000000009px;overflow:hidden;letter-spacing:-0.1px;">Software</div>
<div class="t" style="left:1122.1px;top:494.15px;font-size:14px;line-height:14px;color:#262626;width:65.90000000000009px;overflow:hidden;letter-spacing:-0.1px;">Sí</div>
<div class="t" style="left:1375.1px;top:494.15px;font-size:14px;line-height:14px;color:#262626;width:65.90000000000009px;overflow:hidden;letter-spacing:-0.1px;">1</div>
<svg class="s" style="left:762.2px;top:537.5px" width="15" height="15" viewBox="0 0 15 15">
<circle cx="7.5" cy="7.5" r="5.7" fill="#fff"/>
<path d="M3.5,11.5 A5.7,5.7 0 0 1 11.5,3.5" fill="none" stroke="#161616" stroke-width="2"/>
<path d="M11.5,3.5 A5.7,5.7 0 0 1 3.5,11.5" fill="none" stroke="#cfcfcf" stroke-width="1.5"/>
</svg>
<svg class="s" style="left:791px;top:524px" width="33" height="42" viewBox="0 0 33 42">
<defs><linearGradient id="svg1" x1="0" y1="0" x2="0" y2="1"><stop offset="0" stop-color="#5a9cff"/><stop offset="0.3" stop-color="#1a3af2"/><stop offset="1" stop-color="#1228d8"/></linearGradient>
<linearGradient id="svside" x1="0" y1="0" x2="0" y2="1"><stop offset="0" stop-color="#2a4aa8"/><stop offset="0.45" stop-color="#2456e6"/><stop offset="1" stop-color="#2a4aa8"/></linearGradient>
<linearGradient id="svsh" x1="0" y1="0" x2="0" y2="1"><stop offset="0" stop-color="#8a8a8a"/><stop offset="1" stop-color="#d8d8d8" stop-opacity="0.3"/></linearGradient></defs>
<path d="M19,26 L28,26 L26,36 L19,36 Z" fill="url(#svsh)"/>
<path d="M3.8,3.3 L6,4 L6,37 L3.8,37.5 Z" fill="#2c4c9c"/>
<rect x="6" y="4" width="10" height="2.5" fill="#1d1e26"/>
<rect x="6" y="6.5" width="10" height="28" fill="#464a5a"/>
<rect x="6" y="34" width="10" height="2.5" fill="#1d1e26"/>
<rect x="6" y="13" width="10" height="0.6" fill="#55576a"/><rect x="6" y="17" width="10" height="0.6" fill="#55576a"/>
<circle cx="13.3" cy="9.8" r="0.9" fill="#3a70f5"/><circle cx="13.3" cy="13.6" r="0.9" fill="#3a70f5"/>
<circle cx="10.5" cy="27.4" r="2.6" fill="#1b1c22"/><circle cx="11.2" cy="27" r="0.9" fill="#8a9a8a"/>
<path d="M16,3 L18,3 L22,13 L22,28 L18,38 L16,38 Z" fill="url(#svside)"/>
<path d="M22,15.5 C22,12.5 24.5,12 27,12 L32,12 L32,27.6 L27,27.6 C24,27.6 22,26.5 22,23.5 Z" fill="url(#svg1)"/>
<path d="M22.5,16.5 C25,15.5 28,15.5 32,16.2 L32,17.5 C28,17 25,17 22.5,17.8 Z" fill="#6aaaff" opacity="0.8"/>
</svg>
<div class="t" style="left:830.1px;top:536.15px;font-size:14px;line-height:14px;color:#262626;width:139.89999999999998px;overflow:hidden;letter-spacing:-0.1px;">H1-nodo-B</div>
<div class="t" style="left:976.1px;top:536.15px;font-size:14px;line-height:14px;color:#262626;width:67.89999999999998px;overflow:hidden;letter-spacing:-0.1px;">Máquina Virtual</div>
<div class="t" style="left:1050.1px;top:536.15px;font-size:14px;line-height:14px;color:#262626;width:65.90000000000009px;overflow:hidden;letter-spacing:-0.1px;">Software</div>
<div class="t" style="left:1122.1px;top:536.15px;font-size:14px;line-height:14px;color:#262626;width:65.90000000000009px;overflow:hidden;letter-spacing:-0.1px;">Sí</div>
<div class="t" style="left:1375.1px;top:536.15px;font-size:14px;line-height:14px;color:#262626;width:65.90000000000009px;overflow:hidden;letter-spacing:-0.1px;">1</div>
<div class="r" style="left:752px;top:567px;width:35px;height:40px;background:#e9f1fd;"></div>
<div class="r" style="left:788px;top:567px;width:36px;height:40px;background:#e9f1fd;"></div>
<div class="r" style="left:825px;top:567px;width:145px;height:40px;background:#e9f1fd;"></div>
<div class="r" style="left:971px;top:567px;width:73px;height:40px;background:#e9f1fd;"></div>
<div class="r" style="left:1045px;top:567px;width:71px;height:40px;background:#e9f1fd;"></div>
<div class="r" style="left:1117px;top:567px;width:71px;height:40px;background:#e9f1fd;"></div>
<div class="r" style="left:1189px;top:567px;width:107px;height:40px;background:#e9f1fd;"></div>
<div class="r" style="left:1297px;top:567px;width:72px;height:40px;background:#e9f1fd;"></div>
<div class="r" style="left:1370px;top:567px;width:71px;height:40px;background:#e9f1fd;"></div>
<div class="r" style="left:1442px;top:567px;width:37px;height:40px;background:#e9f1fd;"></div>
<svg class="s" style="left:762.2px;top:579.5px" width="15" height="15" viewBox="0 0 15 15">
<circle cx="7.5" cy="7.5" r="5.7" fill="#fff"/>
<path d="M3.5,11.5 A5.7,5.7 0 0 1 11.5,3.5" fill="none" stroke="#161616" stroke-width="2"/>
<path d="M11.5,3.5 A5.7,5.7 0 0 1 3.5,11.5" fill="none" stroke="#cfcfcf" stroke-width="1.5"/>
</svg>
<svg class="s" style="left:791px;top:566px" width="33" height="42" viewBox="0 0 33 42">
<defs><linearGradient id="svg1" x1="0" y1="0" x2="0" y2="1"><stop offset="0" stop-color="#5a9cff"/><stop offset="0.3" stop-color="#1a3af2"/><stop offset="1" stop-color="#1228d8"/></linearGradient>
<linearGradient id="svside" x1="0" y1="0" x2="0" y2="1"><stop offset="0" stop-color="#2a4aa8"/><stop offset="0.45" stop-color="#2456e6"/><stop offset="1" stop-color="#2a4aa8"/></linearGradient>
<linearGradient id="svsh" x1="0" y1="0" x2="0" y2="1"><stop offset="0" stop-color="#8a8a8a"/><stop offset="1" stop-color="#d8d8d8" stop-opacity="0.3"/></linearGradient></defs>
<path d="M19,26 L28,26 L26,36 L19,36 Z" fill="url(#svsh)"/>
<path d="M3.8,3.3 L6,4 L6,37 L3.8,37.5 Z" fill="#2c4c9c"/>
<rect x="6" y="4" width="10" height="2.5" fill="#1d1e26"/>
<rect x="6" y="6.5" width="10" height="28" fill="#464a5a"/>
<rect x="6" y="34" width="10" height="2.5" fill="#1d1e26"/>
<rect x="6" y="13" width="10" height="0.6" fill="#55576a"/><rect x="6" y="17" width="10" height="0.6" fill="#55576a"/>
<circle cx="13.3" cy="9.8" r="0.9" fill="#3a70f5"/><circle cx="13.3" cy="13.6" r="0.9" fill="#3a70f5"/>
<circle cx="10.5" cy="27.4" r="2.6" fill="#1b1c22"/><circle cx="11.2" cy="27" r="0.9" fill="#8a9a8a"/>
<path d="M16,3 L18,3 L22,13 L22,28 L18,38 L16,38 Z" fill="url(#svside)"/>
<path d="M22,15.5 C22,12.5 24.5,12 27,12 L32,12 L32,27.6 L27,27.6 C24,27.6 22,26.5 22,23.5 Z" fill="url(#svg1)"/>
<path d="M22.5,16.5 C25,15.5 28,15.5 32,16.2 L32,17.5 C28,17 25,17 22.5,17.8 Z" fill="#6aaaff" opacity="0.8"/>
</svg>
<div class="t" style="left:830.1px;top:578.15px;font-size:14px;line-height:14px;color:#262626;width:139.89999999999998px;overflow:hidden;letter-spacing:-0.1px;">H1-nodo-C</div>
<div class="t" style="left:976.1px;top:578.15px;font-size:14px;line-height:14px;color:#262626;width:67.89999999999998px;overflow:hidden;letter-spacing:-0.1px;">Máquina Virtual</div>
<div class="t" style="left:1050.1px;top:578.15px;font-size:14px;line-height:14px;color:#262626;width:65.90000000000009px;overflow:hidden;letter-spacing:-0.1px;">Software</div>
<div class="t" style="left:1122.1px;top:578.15px;font-size:14px;line-height:14px;color:#262626;width:65.90000000000009px;overflow:hidden;letter-spacing:-0.1px;">Sí</div>
<div class="t" style="left:1375.1px;top:578.15px;font-size:14px;line-height:14px;color:#262626;width:65.90000000000009px;overflow:hidden;letter-spacing:-0.1px;">1</div>
<div class="r" style="left:752px;top:628px;width:727px;height:19px;background:#f1f1f1;"></div>
<div class="r" style="left:35px;top:630px;width:654px;height:17px;background:#c1c1c1;"></div>
<div class="r" style="left:772px;top:630px;width:655px;height:17px;background:#c1c1c1;"></div>
<svg class="s" style="left:21px;top:633px" width="8" height="11"><polygon points="6,0.8 1,5.3 6,9.8" fill="#a3a3a3"/></svg>
<svg class="s" style="left:728px;top:633px" width="8" height="11"><polygon points="1,0.8 6,5.3 1,9.8" fill="#505050"/></svg>
<svg class="s" style="left:758px;top:633px" width="8" height="11"><polygon points="6,0.8 1,5.3 6,9.8" fill="#a3a3a3"/></svg>
<svg class="s" style="left:1465px;top:633px" width="8" height="11"><polygon points="1,0.8 6,5.3 1,9.8" fill="#505050"/></svg>
<div class="r" style="left:26px;top:672px;width:278px;height:39px;border:1px solid #ddd;border-radius:4px;background:#fff;"></div>
<div class="t pg" style="left:26.5px;top:685px;width:40px;color:#777;font-size:14px;">«</div>
<div class="r" style="left:66px;top:672px;width:40px;height:39px;background:#337ab7;"></div>
<div class="t pg" style="left:66.5px;top:684px;width:40px;color:#fff;">1</div>
<div class="t pg" style="left:106.5px;top:684px;width:39px;color:#337ab7;">2</div>
<div class="r" style="left:145px;top:672px;width:1px;height:39px;background:#ddd;"></div>
<div class="t pg" style="left:145.5px;top:684px;width:39px;color:#337ab7;">3</div>
<div class="r" style="left:184px;top:672px;width:1px;height:39px;background:#ddd;"></div>
<div class="t pg" style="left:184.5px;top:684px;width:40px;color:#337ab7;">4</div>
<div class="r" style="left:224px;top:672px;width:1px;height:39px;background:#ddd;"></div>
<div class="t pg" style="left:224.5px;top:684px;width:40px;color:#337ab7;">5</div>
<div class="r" style="left:264px;top:672px;width:1px;height:39px;background:#ddd;"></div>
<div class="t pg" style="left:264.5px;top:685px;width:39px;color:#337ab7;font-size:14px;">»</div>
<div class="r" style="left:764px;top:672px;width:278px;height:39px;border:1px solid #ddd;border-radius:4px;background:#fff;"></div>
<div class="t pg" style="left:764.5px;top:685px;width:39px;color:#777;font-size:14px;">«</div>
<div class="r" style="left:803px;top:672px;width:41px;height:39px;background:#337ab7;"></div>
<div class="t pg" style="left:803.5px;top:684px;width:41px;color:#fff;">1</div>
<div class="t pg" style="left:844.5px;top:684px;width:39px;color:#337ab7;">2</div>
<div class="r" style="left:883px;top:672px;width:1px;height:39px;background:#ddd;"></div>
<div class="t pg" style="left:883.5px;top:684px;width:39px;color:#337ab7;">3</div>
<div class="r" style="left:922px;top:672px;width:1px;height:39px;background:#ddd;"></div>
<div class="t pg" style="left:922.5px;top:684px;width:40px;color:#337ab7;">4</div>
<div class="r" style="left:962px;top:672px;width:1px;height:39px;background:#ddd;"></div>
<div class="t pg" style="left:962.5px;top:684px;width:40px;color:#337ab7;">5</div>
<div class="r" style="left:1002px;top:672px;width:1px;height:39px;background:#ddd;"></div>
<div class="t pg" style="left:1002.5px;top:685px;width:39px;color:#337ab7;font-size:14px;">»</div>
<div class="t" style="left:343px;top:686.0px;font-size:15px;line-height:15px;font-style:italic;color:#333;">Registros del 1 al 10 de 85</div>
<div class="t" style="left:1080px;top:686.0px;font-size:15px;line-height:15px;font-style:italic;color:#333;">Registros del 1 al 10 de 85</div>
</body></html>
